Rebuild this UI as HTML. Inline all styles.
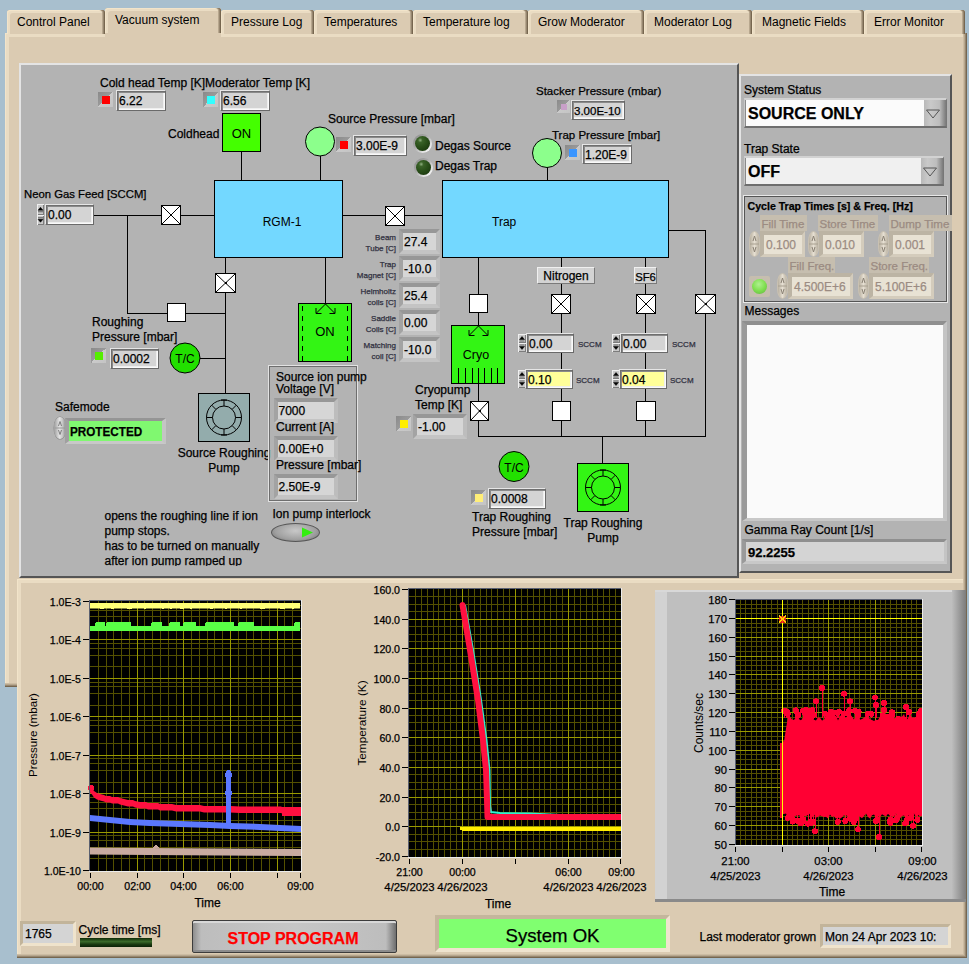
<!DOCTYPE html><html><head><meta charset="utf-8"><style>*{margin:0;padding:0;box-sizing:border-box}
html,body{width:969px;height:964px;overflow:hidden}
body{background:#a8bfce;font-family:"Liberation Sans",sans-serif;font-size:12px;color:#000;position:relative}
div{position:absolute}
.t{white-space:nowrap;-webkit-text-stroke:0.25px currentColor}
.tab{background:#dbcbb2;box-shadow:inset -1px 0 0 #76664f,inset -2px 0 0 #978770,inset -3px 0 0 #b7a78e,inset 1px 1px 0 #f2e4ca,inset 3px 3px 0 #eadcc3;border-radius:3px 3px 0 0;height:24px;top:10px}
.tab span{position:absolute;left:10px;top:5px;white-space:nowrap}
.tabpanel{left:5px;top:33px;width:962px;height:654px;background:#dbcbb2;box-shadow:inset -1px -1px 0 #76664f,inset -2px -2px 0 #978770,inset -3px -3px 0 #b7a78e,inset -4px -4px 0 #ccbca3,inset 1px 1px 0 #f2e4ca,inset 4px 4px 0 #eadcc3}
.gp{background:#b3b3b3}
</style></head><body><div class="tabpanel"></div>
<div class="tab" style="left:7px;width:98px"><span>Control Panel</span></div>
<div class="tab" style="left:221px;width:93px"><span>Pressure Log</span></div>
<div class="tab" style="left:314px;width:99px"><span>Temperatures</span></div>
<div class="tab" style="left:413px;width:115px"><span>Temperature log</span></div>
<div class="tab" style="left:528px;width:116px"><span>Grow Moderator</span></div>
<div class="tab" style="left:644px;width:108px"><span>Moderator Log</span></div>
<div class="tab" style="left:752px;width:112px"><span>Magnetic Fields</span></div>
<div class="tab" style="left:864px;width:101px"><span>Error Monitor</span></div>
<div class="tab" style="left:105px;width:116px;top:8px;height:29px;background:#dbcbb2"><span style="top:5px">Vacuum system</span></div><div style="left:105px;top:33px;width:116px;height:6px;background:#dbcbb2"></div>
<div class="gp" style="left:19px;top:63px;width:720px;height:515px;border-top:2px solid #e4e4e4;border-left:2px solid #e4e4e4;border-right:2px solid #555;border-bottom:2px solid #555"></div>
<div class="gp" style="left:739px;top:74px;width:213px;height:499px;border-top:2px solid #e4e4e4;border-left:2px solid #e4e4e4;border-right:2px solid #555;border-bottom:2px solid #555"></div>
<div style="left:17px;top:579px;width:950px;height:379px;background:#dbcbb2;box-shadow:inset -1px -1px 0 #76664f,inset -2px -2px 0 #978770,inset -3px -3px 0 #b7a78e,inset -4px -4px 0 #ccbca3,inset 1px 1px 0 #f2e4ca,inset 4px 4px 0 #eadcc3"></div>
<svg style="position:absolute;left:0;top:0" width="969" height="964" shape-rendering="crispEdges"><line x1="93" y1="215.5" x2="214" y2="215.5" stroke="#000" stroke-width="1"/><line x1="127.5" y1="215" x2="127.5" y2="314" stroke="#000" stroke-width="1"/><line x1="127" y1="313.5" x2="226" y2="313.5" stroke="#000" stroke-width="1"/><line x1="241.5" y1="151" x2="241.5" y2="180" stroke="#000" stroke-width="1"/><line x1="320.5" y1="156" x2="320.5" y2="180" stroke="#000" stroke-width="1"/><line x1="342" y1="215.5" x2="442" y2="215.5" stroke="#000" stroke-width="1"/><line x1="225.5" y1="257" x2="225.5" y2="393" stroke="#000" stroke-width="1"/><line x1="200" y1="358.5" x2="226" y2="358.5" stroke="#000" stroke-width="1"/><line x1="325.5" y1="257" x2="325.5" y2="303" stroke="#000" stroke-width="1"/><line x1="547.5" y1="167" x2="547.5" y2="180" stroke="#000" stroke-width="1"/><line x1="668" y1="230.5" x2="706" y2="230.5" stroke="#000" stroke-width="1"/><line x1="705.5" y1="230" x2="705.5" y2="437" stroke="#000" stroke-width="1"/><line x1="478" y1="436.5" x2="706" y2="436.5" stroke="#000" stroke-width="1"/><line x1="478.5" y1="257" x2="478.5" y2="437" stroke="#000" stroke-width="1"/><line x1="561.5" y1="257" x2="561.5" y2="437" stroke="#000" stroke-width="1"/><line x1="645.5" y1="257" x2="645.5" y2="437" stroke="#000" stroke-width="1"/><line x1="602.5" y1="436" x2="602.5" y2="463" stroke="#000" stroke-width="1"/><rect x="214.5" y="180.5" width="128" height="77" fill="#73d8ff" stroke="#000"/><rect x="442.5" y="180.5" width="226" height="77" fill="#73d8ff" stroke="#000"/><rect x="161.5" y="205.5" width="19" height="19" fill="#fff" stroke="#000"/><path d="M162 206L180 224M180 206L162 224" stroke="#000" stroke-width="1" shape-rendering="auto"/><rect x="170.0" y="214.0" width="2" height="2" fill="#000"/><rect x="385.5" y="206.5" width="19" height="19" fill="#fff" stroke="#000"/><path d="M386 207L404 225M404 207L386 225" stroke="#000" stroke-width="1" shape-rendering="auto"/><rect x="394.0" y="215.0" width="2" height="2" fill="#000"/><rect x="215.5" y="273.5" width="20" height="19" fill="#fff" stroke="#000"/><path d="M216 274L235 292M235 274L216 292" stroke="#000" stroke-width="1" shape-rendering="auto"/><rect x="224.5" y="282.0" width="2" height="2" fill="#000"/><rect x="695.5" y="294.5" width="20" height="19" fill="#fff" stroke="#000"/><path d="M696 295L715 313M715 295L696 313" stroke="#000" stroke-width="1" shape-rendering="auto"/><rect x="704.5" y="303.0" width="2" height="2" fill="#000"/><rect x="551.5" y="294.5" width="19" height="19" fill="#fff" stroke="#000"/><path d="M552 295L570 313M570 295L552 313" stroke="#000" stroke-width="1" shape-rendering="auto"/><rect x="560.0" y="303.0" width="2" height="2" fill="#000"/><rect x="636.5" y="294.5" width="19" height="19" fill="#fff" stroke="#000"/><path d="M637 295L655 313M655 295L637 313" stroke="#000" stroke-width="1" shape-rendering="auto"/><rect x="645.0" y="303.0" width="2" height="2" fill="#000"/><rect x="470.5" y="401.5" width="18" height="19" fill="#fff" stroke="#000"/><path d="M471 402L488 420M488 402L471 420" stroke="#000" stroke-width="1" shape-rendering="auto"/><rect x="478.5" y="410.0" width="2" height="2" fill="#000"/><rect x="167.5" y="303.5" width="18" height="18" fill="#fff" stroke="#000"/><rect x="469.5" y="294.5" width="18" height="18" fill="#fff" stroke="#000"/><rect x="552.5" y="401.5" width="18" height="19" fill="#fff" stroke="#000"/><rect x="636.5" y="401.5" width="19" height="19" fill="#fff" stroke="#000"/><rect x="298.5" y="303.5" width="53" height="58" fill="#33f514" stroke="#000"/><path d="M302.5 305V361M347.5 305V361" stroke="#000" stroke-dasharray="5 5" stroke-dashoffset="-1"/><path d="M325.5 304L316.5 313M325.5 304L334.5 313M316.0 308V313.5H321.5M335.0 308V313.5H329.5" stroke="#000" fill="none" shape-rendering="auto"/><rect x="451.5" y="325.5" width="53" height="58" fill="#33f514" stroke="#000"/><path d="M478.5 326L469.5 335M478.5 326L487.5 335M469.0 330V335.5H474.5M488.0 330V335.5H482.5" stroke="#000" fill="none" shape-rendering="auto"/><line x1="458.5" y1="368" x2="458.5" y2="383" stroke="#000" stroke-width="1"/><line x1="465.5" y1="368" x2="465.5" y2="383" stroke="#000" stroke-width="1"/><line x1="472.5" y1="368" x2="472.5" y2="383" stroke="#000" stroke-width="1"/><line x1="478.5" y1="368" x2="478.5" y2="383" stroke="#000" stroke-width="1"/><line x1="484.5" y1="368" x2="484.5" y2="383" stroke="#000" stroke-width="1"/><line x1="491.5" y1="368" x2="491.5" y2="383" stroke="#000" stroke-width="1"/><line x1="497.5" y1="368" x2="497.5" y2="383" stroke="#000" stroke-width="1"/><rect x="222.5" y="113.5" width="38" height="38" fill="#44ff00" stroke="#000"/><circle cx="320" cy="141.5" r="14.5" fill="#8cff8c" stroke="#000" shape-rendering="auto"/><circle cx="547" cy="153" r="14.5" fill="#8cff8c" stroke="#000" shape-rendering="auto"/><circle cx="185" cy="358" r="15" fill="#22e000" stroke="#000" shape-rendering="auto"/><circle cx="514" cy="466.5" r="15" fill="#22e000" stroke="#000" shape-rendering="auto"/><rect x="198.5" y="393.5" width="51" height="48" fill="#93acac" stroke="#000"/><g shape-rendering="auto"><circle cx="224" cy="417.5" r="17.5" fill="none" stroke="#000"/><circle cx="224" cy="417.5" r="11.5" fill="none" stroke="#000"/><line x1="235.50" y1="417.50" x2="241.50" y2="417.50" stroke="#000"/><line x1="232.13" y1="425.63" x2="236.37" y2="429.87" stroke="#000"/><line x1="224.00" y1="429.00" x2="224.00" y2="435.00" stroke="#000"/><line x1="215.87" y1="425.63" x2="211.63" y2="429.87" stroke="#000"/><line x1="212.50" y1="417.50" x2="206.50" y2="417.50" stroke="#000"/><line x1="215.87" y1="409.37" x2="211.63" y2="405.13" stroke="#000"/><line x1="224.00" y1="406.00" x2="224.00" y2="400.00" stroke="#000"/><line x1="232.13" y1="409.37" x2="236.37" y2="405.13" stroke="#000"/><path d="M221 400.0H227M221 435.0H227" stroke="#000"/></g><rect x="577.5" y="463.5" width="51" height="48" fill="#33f514" stroke="#000"/><g shape-rendering="auto"><circle cx="603" cy="487.5" r="17.5" fill="none" stroke="#000"/><circle cx="603" cy="487.5" r="11.5" fill="none" stroke="#000"/><line x1="614.50" y1="487.50" x2="620.50" y2="487.50" stroke="#000"/><line x1="611.13" y1="495.63" x2="615.37" y2="499.87" stroke="#000"/><line x1="603.00" y1="499.00" x2="603.00" y2="505.00" stroke="#000"/><line x1="594.87" y1="495.63" x2="590.63" y2="499.87" stroke="#000"/><line x1="591.50" y1="487.50" x2="585.50" y2="487.50" stroke="#000"/><line x1="594.87" y1="479.37" x2="590.63" y2="475.13" stroke="#000"/><line x1="603.00" y1="476.00" x2="603.00" y2="470.00" stroke="#000"/><line x1="611.13" y1="479.37" x2="615.37" y2="475.13" stroke="#000"/><path d="M600 470.0H606M600 505.0H606" stroke="#000"/></g></svg><svg style="position:absolute;left:0;top:0" width="969" height="964" shape-rendering="crispEdges"><defs><clipPath id="cp2"><rect x="409" y="589" width="212" height="268"/></clipPath><clipPath id="cp3"><rect x="736" y="600" width="186" height="245"/></clipPath><linearGradient id="gr3" x1="0" x2="1"><stop offset="0" stop-color="#bdbdbd"/><stop offset="1" stop-color="#7c7c7c"/></linearGradient></defs><rect x="90" y="601" width="211" height="270" fill="#000"/><line x1="90" y1="858.5" x2="301" y2="858.5" stroke="#545000" stroke-width="1"/><line x1="90" y1="847.5" x2="301" y2="847.5" stroke="#545000" stroke-width="1"/><line x1="90" y1="840.5" x2="301" y2="840.5" stroke="#545000" stroke-width="1"/><line x1="90" y1="835.5" x2="301" y2="835.5" stroke="#545000" stroke-width="1"/><line x1="90" y1="820.5" x2="301" y2="820.5" stroke="#545000" stroke-width="1"/><line x1="90" y1="808.5" x2="301" y2="808.5" stroke="#545000" stroke-width="1"/><line x1="90" y1="802.5" x2="301" y2="802.5" stroke="#545000" stroke-width="1"/><line x1="90" y1="797.5" x2="301" y2="797.5" stroke="#545000" stroke-width="1"/><line x1="90" y1="782.5" x2="301" y2="782.5" stroke="#545000" stroke-width="1"/><line x1="90" y1="770.5" x2="301" y2="770.5" stroke="#545000" stroke-width="1"/><line x1="90" y1="763.5" x2="301" y2="763.5" stroke="#545000" stroke-width="1"/><line x1="90" y1="758.5" x2="301" y2="758.5" stroke="#545000" stroke-width="1"/><line x1="90" y1="743.5" x2="301" y2="743.5" stroke="#545000" stroke-width="1"/><line x1="90" y1="732.5" x2="301" y2="732.5" stroke="#545000" stroke-width="1"/><line x1="90" y1="725.5" x2="301" y2="725.5" stroke="#545000" stroke-width="1"/><line x1="90" y1="720.5" x2="301" y2="720.5" stroke="#545000" stroke-width="1"/><line x1="90" y1="705.5" x2="301" y2="705.5" stroke="#545000" stroke-width="1"/><line x1="90" y1="693.5" x2="301" y2="693.5" stroke="#545000" stroke-width="1"/><line x1="90" y1="686.5" x2="301" y2="686.5" stroke="#545000" stroke-width="1"/><line x1="90" y1="682.5" x2="301" y2="682.5" stroke="#545000" stroke-width="1"/><line x1="90" y1="666.5" x2="301" y2="666.5" stroke="#545000" stroke-width="1"/><line x1="90" y1="655.5" x2="301" y2="655.5" stroke="#545000" stroke-width="1"/><line x1="90" y1="648.5" x2="301" y2="648.5" stroke="#545000" stroke-width="1"/><line x1="90" y1="643.5" x2="301" y2="643.5" stroke="#545000" stroke-width="1"/><line x1="90" y1="628.5" x2="301" y2="628.5" stroke="#545000" stroke-width="1"/><line x1="90" y1="616.5" x2="301" y2="616.5" stroke="#545000" stroke-width="1"/><line x1="90" y1="610.5" x2="301" y2="610.5" stroke="#545000" stroke-width="1"/><line x1="90" y1="605.5" x2="301" y2="605.5" stroke="#545000" stroke-width="1"/><line x1="98.5" y1="601" x2="98.5" y2="871" stroke="#545000" stroke-width="1"/><line x1="106.5" y1="601" x2="106.5" y2="871" stroke="#545000" stroke-width="1"/><line x1="113.5" y1="601" x2="113.5" y2="871" stroke="#545000" stroke-width="1"/><line x1="121.5" y1="601" x2="121.5" y2="871" stroke="#545000" stroke-width="1"/><line x1="129.5" y1="601" x2="129.5" y2="871" stroke="#545000" stroke-width="1"/><line x1="144.5" y1="601" x2="144.5" y2="871" stroke="#545000" stroke-width="1"/><line x1="152.5" y1="601" x2="152.5" y2="871" stroke="#545000" stroke-width="1"/><line x1="160.5" y1="601" x2="160.5" y2="871" stroke="#545000" stroke-width="1"/><line x1="168.5" y1="601" x2="168.5" y2="871" stroke="#545000" stroke-width="1"/><line x1="176.5" y1="601" x2="176.5" y2="871" stroke="#545000" stroke-width="1"/><line x1="191.5" y1="601" x2="191.5" y2="871" stroke="#545000" stroke-width="1"/><line x1="199.5" y1="601" x2="199.5" y2="871" stroke="#545000" stroke-width="1"/><line x1="207.5" y1="601" x2="207.5" y2="871" stroke="#545000" stroke-width="1"/><line x1="214.5" y1="601" x2="214.5" y2="871" stroke="#545000" stroke-width="1"/><line x1="222.5" y1="601" x2="222.5" y2="871" stroke="#545000" stroke-width="1"/><line x1="238.5" y1="601" x2="238.5" y2="871" stroke="#545000" stroke-width="1"/><line x1="246.5" y1="601" x2="246.5" y2="871" stroke="#545000" stroke-width="1"/><line x1="253.5" y1="601" x2="253.5" y2="871" stroke="#545000" stroke-width="1"/><line x1="261.5" y1="601" x2="261.5" y2="871" stroke="#545000" stroke-width="1"/><line x1="269.5" y1="601" x2="269.5" y2="871" stroke="#545000" stroke-width="1"/><line x1="284.5" y1="601" x2="284.5" y2="871" stroke="#545000" stroke-width="1"/><line x1="292.5" y1="601" x2="292.5" y2="871" stroke="#545000" stroke-width="1"/><line x1="90" y1="832.5" x2="301" y2="832.5" stroke="#999900" stroke-width="1"/><line x1="90" y1="793.5" x2="301" y2="793.5" stroke="#999900" stroke-width="1"/><line x1="90" y1="755.5" x2="301" y2="755.5" stroke="#999900" stroke-width="1"/><line x1="90" y1="716.5" x2="301" y2="716.5" stroke="#999900" stroke-width="1"/><line x1="90" y1="678.5" x2="301" y2="678.5" stroke="#999900" stroke-width="1"/><line x1="90" y1="639.5" x2="301" y2="639.5" stroke="#999900" stroke-width="1"/><line x1="137.5" y1="601" x2="137.5" y2="871" stroke="#999900" stroke-width="1"/><line x1="183.5" y1="601" x2="183.5" y2="871" stroke="#999900" stroke-width="1"/><line x1="230.5" y1="601" x2="230.5" y2="871" stroke="#999900" stroke-width="1"/><line x1="277.5" y1="601" x2="277.5" y2="871" stroke="#999900" stroke-width="1"/><polygon points="90.0,603.0 92.0,603.0 94.0,603.0 96.0,603.0 98.0,603.0 100.0,603.0 102.0,603.0 104.0,603.0 106.0,603.0 108.0,603.0 110.0,603.0 112.0,603.0 114.0,603.0 116.0,603.0 118.0,603.0 120.0,603.0 122.0,603.0 124.0,603.0 126.0,603.0 128.0,603.0 130.0,603.0 132.0,603.0 134.0,603.0 136.0,603.0 138.0,603.0 140.0,603.0 142.0,603.0 144.0,603.0 146.0,603.0 148.0,603.0 150.0,603.0 152.0,603.0 154.0,603.0 156.0,603.0 158.0,603.0 160.0,603.0 162.0,603.0 164.0,603.0 166.0,603.0 168.0,603.0 170.0,603.0 172.0,603.0 174.0,603.0 176.0,603.0 178.0,603.0 180.0,603.0 182.0,603.0 184.0,603.0 186.0,603.0 188.0,603.0 190.0,603.0 192.0,603.0 194.0,603.0 196.0,603.0 198.0,603.0 200.0,603.0 202.0,603.0 204.0,603.0 206.0,603.0 208.0,603.0 210.0,603.0 212.0,603.0 214.0,603.0 216.0,603.0 218.0,603.0 220.0,603.0 222.0,603.0 224.0,603.0 226.0,603.0 228.0,603.0 230.0,603.0 232.0,603.0 234.0,603.0 236.0,603.0 238.0,603.0 240.0,603.0 242.0,603.0 244.0,603.0 246.0,603.0 248.0,603.0 250.0,603.0 252.0,603.0 254.0,603.0 256.0,603.0 258.0,603.0 260.0,603.0 262.0,603.0 264.0,603.0 266.0,603.0 268.0,603.0 270.0,603.0 272.0,603.0 274.0,603.0 276.0,603.0 278.0,603.0 280.0,603.0 282.0,603.0 284.0,603.0 286.0,603.0 288.0,603.0 290.0,603.0 292.0,603.0 294.0,603.0 296.0,603.0 298.0,603.0 300.0,603.0 300.0,608.5 298.0,608.5 296.0,608.5 294.0,608.5 292.0,608.5 290.0,608.5 288.0,608.5 286.0,608.5 284.0,608.5 282.0,608.5 280.0,608.5 278.0,608.5 276.0,608.5 274.0,608.5 272.0,608.5 270.0,608.5 268.0,608.5 266.0,608.5 264.0,608.5 262.0,608.5 260.0,608.5 258.0,608.5 256.0,608.5 254.0,608.5 252.0,608.5 250.0,608.5 248.0,608.5 246.0,608.5 244.0,608.5 242.0,608.5 240.0,608.5 238.0,608.5 236.0,608.5 234.0,608.5 232.0,608.5 230.0,608.5 228.0,608.5 226.0,608.5 224.0,608.5 222.0,608.5 220.0,608.5 218.0,608.5 216.0,608.5 214.0,608.5 212.0,608.5 210.0,608.5 208.0,608.5 206.0,608.5 204.0,608.5 202.0,608.5 200.0,608.5 198.0,608.5 196.0,608.5 194.0,608.5 192.0,608.5 190.0,608.5 188.0,608.5 186.0,608.5 184.0,608.5 182.0,608.5 180.0,608.5 178.0,608.5 176.0,608.5 174.0,608.5 172.0,608.5 170.0,608.5 168.0,608.5 166.0,608.5 164.0,608.5 162.0,608.5 160.0,608.5 158.0,608.5 156.0,608.5 154.0,608.5 152.0,608.5 150.0,608.5 148.0,608.5 146.0,608.5 144.0,608.5 142.0,608.5 140.0,608.5 138.0,608.5 136.0,608.5 134.0,608.5 132.0,608.5 130.0,608.5 128.0,608.5 126.0,608.5 124.0,608.5 122.0,608.5 120.0,608.5 118.0,608.5 116.0,608.5 114.0,608.5 112.0,608.5 110.0,608.5 108.0,608.5 106.0,608.5 104.0,608.5 102.0,608.5 100.0,608.5 98.0,608.5 96.0,608.5 94.0,608.5 92.0,608.5 90.0,608.5" fill="#ffff78" shape-rendering="auto"/><rect x="100" y="607" width="4" height="2" fill="#ffff78"/><rect x="111" y="607" width="3" height="2" fill="#ffff78"/><rect x="127" y="607" width="5" height="2" fill="#ffff78"/><rect x="144" y="607" width="2" height="2" fill="#ffff78"/><rect x="162" y="607" width="2" height="2" fill="#ffff78"/><rect x="170" y="607" width="2" height="2" fill="#ffff78"/><rect x="180" y="607" width="4" height="2" fill="#ffff78"/><rect x="190" y="607" width="2" height="2" fill="#ffff78"/><rect x="210" y="607" width="3" height="2" fill="#ffff78"/><rect x="225" y="607" width="2" height="2" fill="#ffff78"/><rect x="240" y="607" width="2" height="2" fill="#ffff78"/><rect x="260" y="607" width="5" height="2" fill="#ffff78"/><rect x="280" y="607" width="5" height="2" fill="#ffff78"/><rect x="292" y="607" width="2" height="2" fill="#ffff78"/><polygon points="90.0,626.0 92.0,626.0 94.0,626.0 96.0,626.0 98.0,626.0 100.0,626.0 102.0,626.0 104.0,626.0 106.0,626.0 108.0,626.0 110.0,626.0 112.0,626.0 114.0,626.0 116.0,626.0 118.0,626.0 120.0,626.0 122.0,626.0 124.0,626.0 126.0,626.0 128.0,626.0 130.0,626.0 132.0,626.0 134.0,626.0 136.0,626.0 138.0,626.0 140.0,626.0 142.0,626.0 144.0,626.0 146.0,626.0 148.0,626.0 150.0,626.0 152.0,626.0 154.0,626.0 156.0,626.0 158.0,626.0 160.0,626.0 162.0,626.0 164.0,626.0 166.0,626.0 168.0,626.0 170.0,626.0 172.0,626.0 174.0,626.0 176.0,626.0 178.0,626.0 180.0,626.0 182.0,626.0 184.0,626.0 186.0,626.0 188.0,626.0 190.0,626.0 192.0,626.0 194.0,626.0 196.0,626.0 198.0,626.0 200.0,626.0 202.0,626.0 204.0,626.0 206.0,626.0 208.0,626.0 210.0,626.0 212.0,626.0 214.0,626.0 216.0,626.0 218.0,626.0 220.0,626.0 222.0,626.0 224.0,626.0 226.0,626.0 228.0,626.0 230.0,626.0 232.0,626.0 234.0,626.0 236.0,626.0 238.0,626.0 240.0,626.0 242.0,626.0 244.0,626.0 246.0,626.0 248.0,626.0 250.0,626.0 252.0,626.0 254.0,626.0 256.0,626.0 258.0,626.0 260.0,626.0 262.0,626.0 264.0,626.0 266.0,626.0 268.0,626.0 270.0,626.0 272.0,626.0 274.0,626.0 276.0,626.0 278.0,626.0 280.0,626.0 282.0,626.0 284.0,626.0 286.0,626.0 288.0,626.0 290.0,626.0 292.0,626.0 294.0,626.0 296.0,626.0 298.0,626.0 300.0,626.0 300.0,631.0 298.0,631.0 296.0,631.0 294.0,631.0 292.0,631.0 290.0,631.0 288.0,631.0 286.0,631.0 284.0,631.0 282.0,631.0 280.0,631.0 278.0,631.0 276.0,631.0 274.0,631.0 272.0,631.0 270.0,631.0 268.0,631.0 266.0,631.0 264.0,631.0 262.0,631.0 260.0,631.0 258.0,631.0 256.0,631.0 254.0,631.0 252.0,631.0 250.0,631.0 248.0,631.0 246.0,631.0 244.0,631.0 242.0,631.0 240.0,631.0 238.0,631.0 236.0,631.0 234.0,631.0 232.0,631.0 230.0,631.0 228.0,631.0 226.0,631.0 224.0,631.0 222.0,631.0 220.0,631.0 218.0,631.0 216.0,631.0 214.0,631.0 212.0,631.0 210.0,631.0 208.0,631.0 206.0,631.0 204.0,631.0 202.0,631.0 200.0,631.0 198.0,631.0 196.0,631.0 194.0,631.0 192.0,631.0 190.0,631.0 188.0,631.0 186.0,631.0 184.0,631.0 182.0,631.0 180.0,631.0 178.0,631.0 176.0,631.0 174.0,631.0 172.0,631.0 170.0,631.0 168.0,631.0 166.0,631.0 164.0,631.0 162.0,631.0 160.0,631.0 158.0,631.0 156.0,631.0 154.0,631.0 152.0,631.0 150.0,631.0 148.0,631.0 146.0,631.0 144.0,631.0 142.0,631.0 140.0,631.0 138.0,631.0 136.0,631.0 134.0,631.0 132.0,631.0 130.0,631.0 128.0,631.0 126.0,631.0 124.0,631.0 122.0,631.0 120.0,631.0 118.0,631.0 116.0,631.0 114.0,631.0 112.0,631.0 110.0,631.0 108.0,631.0 106.0,631.0 104.0,631.0 102.0,631.0 100.0,631.0 98.0,631.0 96.0,631.0 94.0,631.0 92.0,631.0 90.0,631.0" fill="#5aff46" shape-rendering="auto"/><rect x="95" y="622" width="10" height="6" rx="2" fill="#5aff46"/><rect x="106" y="622" width="25" height="6" rx="2" fill="#5aff46"/><rect x="151" y="622" width="11" height="6" rx="2" fill="#5aff46"/><rect x="169" y="622" width="11" height="6" rx="2" fill="#5aff46"/><rect x="183" y="622" width="13" height="6" rx="2" fill="#5aff46"/><rect x="205" y="622" width="29" height="6" rx="2" fill="#5aff46"/><rect x="238" y="622" width="16" height="6" rx="2" fill="#5aff46"/><rect x="294" y="622" width="6" height="6" rx="2" fill="#5aff46"/><polygon points="90.0,786.0 92.0,788.0 94.0,791.0 97.0,793.0 100.0,794.0 104.0,795.0 106.0,796.0 110.0,796.0 112.0,797.0 118.0,797.0 120.0,798.0 124.0,799.0 128.0,800.0 133.0,800.0 135.0,801.0 140.0,802.0 146.0,802.0 148.0,803.0 158.0,803.0 160.0,804.0 172.0,804.0 176.0,805.0 200.0,805.0 204.0,806.0 230.0,806.0 240.0,806.5 281.0,806.5 282.0,807.0 301.0,807.0 301.0,813.5 282.0,813.5 281.0,813.0 240.0,813.0 230.0,812.5 204.0,812.5 200.0,811.5 176.0,811.5 172.0,810.5 160.0,810.5 158.0,809.5 148.0,809.5 146.0,808.5 140.0,808.5 135.0,807.5 133.0,806.5 128.0,806.5 124.0,805.5 120.0,804.5 118.0,803.5 112.0,803.5 110.0,802.5 106.0,802.5 104.0,801.5 100.0,800.5 97.0,799.5 94.0,797.5 92.0,794.5 90.0,792.5" fill="#ff1040" shape-rendering="auto"/><rect x="282" y="809" width="19" height="7" fill="#ff1040"/><circle cx="91" cy="788" r="3" fill="#ff1040"/><polygon points="90.0,815.0 110.0,817.0 130.0,819.0 150.0,820.0 180.0,821.0 210.0,822.0 230.0,823.0 260.0,824.0 280.0,825.0 301.0,826.0 301.0,832.0 280.0,831.0 260.0,830.0 230.0,829.0 210.0,828.0 180.0,827.0 150.0,826.0 130.0,825.0 110.0,823.0 90.0,821.0" fill="#5b78ff" shape-rendering="auto"/><rect x="226" y="771" width="5" height="54" rx="2" fill="#5b78ff"/><ellipse cx="228.5" cy="775" rx="3.2" ry="5" fill="#5b78ff"/><ellipse cx="228.5" cy="793" rx="3.2" ry="4" fill="#5b78ff"/><polygon points="90.0,847.5 150.0,848.0 301.0,849.0 301.0,856.0 150.0,855.0 90.0,854.5" fill="#c8aaa0" shape-rendering="auto"/><polygon points="152,848 156,844.5 160,848" fill="#c8a8a0"/><line x1="89.5" y1="600" x2="89.5" y2="871" stroke="#5a6070" stroke-width="1"/><line x1="89" y1="600.5" x2="301" y2="600.5" stroke="#5a6070" stroke-width="1"/><line x1="89" y1="871.5" x2="302" y2="871.5" stroke="#ececec" stroke-width="1"/><line x1="301.5" y1="600" x2="301.5" y2="872" stroke="#ececec" stroke-width="1"/><line x1="83" y1="870.5" x2="89" y2="870.5" stroke="#000" stroke-width="1"/><line x1="83" y1="832.5" x2="89" y2="832.5" stroke="#000" stroke-width="1"/><line x1="83" y1="793.5" x2="89" y2="793.5" stroke="#000" stroke-width="1"/><line x1="83" y1="755.5" x2="89" y2="755.5" stroke="#000" stroke-width="1"/><line x1="83" y1="716.5" x2="89" y2="716.5" stroke="#000" stroke-width="1"/><line x1="83" y1="678.5" x2="89" y2="678.5" stroke="#000" stroke-width="1"/><line x1="83" y1="639.5" x2="89" y2="639.5" stroke="#000" stroke-width="1"/><line x1="83" y1="601.5" x2="89" y2="601.5" stroke="#000" stroke-width="1"/><line x1="90.5" y1="873" x2="90.5" y2="878" stroke="#000" stroke-width="1"/><line x1="137.5" y1="873" x2="137.5" y2="878" stroke="#000" stroke-width="1"/><line x1="183.5" y1="873" x2="183.5" y2="878" stroke="#000" stroke-width="1"/><line x1="230.5" y1="873" x2="230.5" y2="878" stroke="#000" stroke-width="1"/><line x1="277.5" y1="873" x2="277.5" y2="878" stroke="#000" stroke-width="1"/><line x1="300.5" y1="873" x2="300.5" y2="878" stroke="#000" stroke-width="1"/><text transform="translate(36.5,735) rotate(-90)" text-anchor="middle" font-size="11.6" font-family="Liberation Sans">Pressure (mbar)</text><rect x="409" y="589" width="212" height="268" fill="#000"/><line x1="409" y1="849.5" x2="621" y2="849.5" stroke="#545000" stroke-width="1"/><line x1="409" y1="841.5" x2="621" y2="841.5" stroke="#545000" stroke-width="1"/><line x1="409" y1="834.5" x2="621" y2="834.5" stroke="#545000" stroke-width="1"/><line x1="409" y1="819.5" x2="621" y2="819.5" stroke="#545000" stroke-width="1"/><line x1="409" y1="812.5" x2="621" y2="812.5" stroke="#545000" stroke-width="1"/><line x1="409" y1="804.5" x2="621" y2="804.5" stroke="#545000" stroke-width="1"/><line x1="409" y1="789.5" x2="621" y2="789.5" stroke="#545000" stroke-width="1"/><line x1="409" y1="782.5" x2="621" y2="782.5" stroke="#545000" stroke-width="1"/><line x1="409" y1="774.5" x2="621" y2="774.5" stroke="#545000" stroke-width="1"/><line x1="409" y1="760.5" x2="621" y2="760.5" stroke="#545000" stroke-width="1"/><line x1="409" y1="752.5" x2="621" y2="752.5" stroke="#545000" stroke-width="1"/><line x1="409" y1="745.5" x2="621" y2="745.5" stroke="#545000" stroke-width="1"/><line x1="409" y1="730.5" x2="621" y2="730.5" stroke="#545000" stroke-width="1"/><line x1="409" y1="722.5" x2="621" y2="722.5" stroke="#545000" stroke-width="1"/><line x1="409" y1="715.5" x2="621" y2="715.5" stroke="#545000" stroke-width="1"/><line x1="409" y1="700.5" x2="621" y2="700.5" stroke="#545000" stroke-width="1"/><line x1="409" y1="693.5" x2="621" y2="693.5" stroke="#545000" stroke-width="1"/><line x1="409" y1="685.5" x2="621" y2="685.5" stroke="#545000" stroke-width="1"/><line x1="409" y1="671.5" x2="621" y2="671.5" stroke="#545000" stroke-width="1"/><line x1="409" y1="663.5" x2="621" y2="663.5" stroke="#545000" stroke-width="1"/><line x1="409" y1="656.5" x2="621" y2="656.5" stroke="#545000" stroke-width="1"/><line x1="409" y1="641.5" x2="621" y2="641.5" stroke="#545000" stroke-width="1"/><line x1="409" y1="634.5" x2="621" y2="634.5" stroke="#545000" stroke-width="1"/><line x1="409" y1="626.5" x2="621" y2="626.5" stroke="#545000" stroke-width="1"/><line x1="409" y1="611.5" x2="621" y2="611.5" stroke="#545000" stroke-width="1"/><line x1="409" y1="604.5" x2="621" y2="604.5" stroke="#545000" stroke-width="1"/><line x1="409" y1="596.5" x2="621" y2="596.5" stroke="#545000" stroke-width="1"/><line x1="415.5" y1="589" x2="415.5" y2="857" stroke="#545000" stroke-width="1"/><line x1="421.5" y1="589" x2="421.5" y2="857" stroke="#545000" stroke-width="1"/><line x1="427.5" y1="589" x2="427.5" y2="857" stroke="#545000" stroke-width="1"/><line x1="433.5" y1="589" x2="433.5" y2="857" stroke="#545000" stroke-width="1"/><line x1="438.5" y1="589" x2="438.5" y2="857" stroke="#545000" stroke-width="1"/><line x1="444.5" y1="589" x2="444.5" y2="857" stroke="#545000" stroke-width="1"/><line x1="450.5" y1="589" x2="450.5" y2="857" stroke="#545000" stroke-width="1"/><line x1="456.5" y1="589" x2="456.5" y2="857" stroke="#545000" stroke-width="1"/><line x1="468.5" y1="589" x2="468.5" y2="857" stroke="#545000" stroke-width="1"/><line x1="474.5" y1="589" x2="474.5" y2="857" stroke="#545000" stroke-width="1"/><line x1="480.5" y1="589" x2="480.5" y2="857" stroke="#545000" stroke-width="1"/><line x1="486.5" y1="589" x2="486.5" y2="857" stroke="#545000" stroke-width="1"/><line x1="491.5" y1="589" x2="491.5" y2="857" stroke="#545000" stroke-width="1"/><line x1="497.5" y1="589" x2="497.5" y2="857" stroke="#545000" stroke-width="1"/><line x1="503.5" y1="589" x2="503.5" y2="857" stroke="#545000" stroke-width="1"/><line x1="509.5" y1="589" x2="509.5" y2="857" stroke="#545000" stroke-width="1"/><line x1="521.5" y1="589" x2="521.5" y2="857" stroke="#545000" stroke-width="1"/><line x1="527.5" y1="589" x2="527.5" y2="857" stroke="#545000" stroke-width="1"/><line x1="533.5" y1="589" x2="533.5" y2="857" stroke="#545000" stroke-width="1"/><line x1="539.5" y1="589" x2="539.5" y2="857" stroke="#545000" stroke-width="1"/><line x1="544.5" y1="589" x2="544.5" y2="857" stroke="#545000" stroke-width="1"/><line x1="550.5" y1="589" x2="550.5" y2="857" stroke="#545000" stroke-width="1"/><line x1="556.5" y1="589" x2="556.5" y2="857" stroke="#545000" stroke-width="1"/><line x1="562.5" y1="589" x2="562.5" y2="857" stroke="#545000" stroke-width="1"/><line x1="574.5" y1="589" x2="574.5" y2="857" stroke="#545000" stroke-width="1"/><line x1="580.5" y1="589" x2="580.5" y2="857" stroke="#545000" stroke-width="1"/><line x1="586.5" y1="589" x2="586.5" y2="857" stroke="#545000" stroke-width="1"/><line x1="592.5" y1="589" x2="592.5" y2="857" stroke="#545000" stroke-width="1"/><line x1="597.5" y1="589" x2="597.5" y2="857" stroke="#545000" stroke-width="1"/><line x1="603.5" y1="589" x2="603.5" y2="857" stroke="#545000" stroke-width="1"/><line x1="609.5" y1="589" x2="609.5" y2="857" stroke="#545000" stroke-width="1"/><line x1="615.5" y1="589" x2="615.5" y2="857" stroke="#545000" stroke-width="1"/><line x1="409" y1="826.5" x2="621" y2="826.5" stroke="#999900" stroke-width="1"/><line x1="409" y1="797.5" x2="621" y2="797.5" stroke="#999900" stroke-width="1"/><line x1="409" y1="767.5" x2="621" y2="767.5" stroke="#999900" stroke-width="1"/><line x1="409" y1="737.5" x2="621" y2="737.5" stroke="#999900" stroke-width="1"/><line x1="409" y1="708.5" x2="621" y2="708.5" stroke="#999900" stroke-width="1"/><line x1="409" y1="678.5" x2="621" y2="678.5" stroke="#999900" stroke-width="1"/><line x1="409" y1="648.5" x2="621" y2="648.5" stroke="#999900" stroke-width="1"/><line x1="409" y1="619.5" x2="621" y2="619.5" stroke="#999900" stroke-width="1"/><line x1="462.5" y1="589" x2="462.5" y2="857" stroke="#999900" stroke-width="1"/><line x1="515.5" y1="589" x2="515.5" y2="857" stroke="#999900" stroke-width="1"/><line x1="568.5" y1="589" x2="568.5" y2="857" stroke="#999900" stroke-width="1"/><polyline points="465,605 473,650 481,700 486.5,740 489.5,770 490,806 491,812 500,813 530,813.5 550,814.5 570,815.5 621,816" fill="none" stroke="#30f0d0" stroke-width="2" shape-rendering="auto"/><polyline points="462.5,605 470,650 478,700 483,740 486,770 487,800 487.5,817 500,817 621,817" fill="none" stroke="#ff1040" stroke-width="6" stroke-linejoin="round" stroke-linecap="round" shape-rendering="auto" clip-path="url(#cp2)"/><line x1="462" y1="828.5" x2="621" y2="828.5" stroke="#ffee00" stroke-width="4" stroke-linecap="round" clip-path="url(#cp2)"/><line x1="408.5" y1="588" x2="408.5" y2="857" stroke="#5a6070" stroke-width="1"/><line x1="408" y1="588.5" x2="621" y2="588.5" stroke="#5a6070" stroke-width="1"/><line x1="408" y1="857.5" x2="622" y2="857.5" stroke="#ececec" stroke-width="1"/><line x1="621.5" y1="588" x2="621.5" y2="858" stroke="#ececec" stroke-width="1"/><line x1="402" y1="856.5" x2="408" y2="856.5" stroke="#000" stroke-width="1"/><line x1="402" y1="826.5" x2="408" y2="826.5" stroke="#000" stroke-width="1"/><line x1="402" y1="797.5" x2="408" y2="797.5" stroke="#000" stroke-width="1"/><line x1="402" y1="767.5" x2="408" y2="767.5" stroke="#000" stroke-width="1"/><line x1="402" y1="737.5" x2="408" y2="737.5" stroke="#000" stroke-width="1"/><line x1="402" y1="708.5" x2="408" y2="708.5" stroke="#000" stroke-width="1"/><line x1="402" y1="678.5" x2="408" y2="678.5" stroke="#000" stroke-width="1"/><line x1="402" y1="648.5" x2="408" y2="648.5" stroke="#000" stroke-width="1"/><line x1="402" y1="619.5" x2="408" y2="619.5" stroke="#000" stroke-width="1"/><line x1="402" y1="589.5" x2="408" y2="589.5" stroke="#000" stroke-width="1"/><line x1="409.5" y1="859" x2="409.5" y2="864" stroke="#000" stroke-width="1"/><line x1="462.5" y1="859" x2="462.5" y2="864" stroke="#000" stroke-width="1"/><line x1="515.5" y1="859" x2="515.5" y2="864" stroke="#000" stroke-width="1"/><line x1="568.5" y1="859" x2="568.5" y2="864" stroke="#000" stroke-width="1"/><line x1="620.5" y1="859" x2="620.5" y2="864" stroke="#000" stroke-width="1"/><text transform="translate(365.5,723) rotate(-90)" text-anchor="middle" font-size="11.8" font-family="Liberation Sans">Temperature (K)</text><rect x="655" y="590" width="311" height="312" fill="#bfbfbf"/><rect x="655" y="590" width="12" height="312" fill="#d2d2d2"/><rect x="655" y="590" width="311" height="2" fill="#d8d8d8"/><rect x="952" y="590" width="14" height="312" fill="url(#gr3)"/><rect x="655" y="899" width="311" height="3" fill="#8a8a8a"/><rect x="736" y="600" width="186" height="245" fill="#000"/><line x1="736" y1="839.5" x2="922" y2="839.5" stroke="#545000" stroke-width="1"/><line x1="736" y1="835.5" x2="922" y2="835.5" stroke="#545000" stroke-width="1"/><line x1="736" y1="830.5" x2="922" y2="830.5" stroke="#545000" stroke-width="1"/><line x1="736" y1="820.5" x2="922" y2="820.5" stroke="#545000" stroke-width="1"/><line x1="736" y1="816.5" x2="922" y2="816.5" stroke="#545000" stroke-width="1"/><line x1="736" y1="811.5" x2="922" y2="811.5" stroke="#545000" stroke-width="1"/><line x1="736" y1="802.5" x2="922" y2="802.5" stroke="#545000" stroke-width="1"/><line x1="736" y1="797.5" x2="922" y2="797.5" stroke="#545000" stroke-width="1"/><line x1="736" y1="792.5" x2="922" y2="792.5" stroke="#545000" stroke-width="1"/><line x1="736" y1="783.5" x2="922" y2="783.5" stroke="#545000" stroke-width="1"/><line x1="736" y1="778.5" x2="922" y2="778.5" stroke="#545000" stroke-width="1"/><line x1="736" y1="773.5" x2="922" y2="773.5" stroke="#545000" stroke-width="1"/><line x1="736" y1="764.5" x2="922" y2="764.5" stroke="#545000" stroke-width="1"/><line x1="736" y1="759.5" x2="922" y2="759.5" stroke="#545000" stroke-width="1"/><line x1="736" y1="754.5" x2="922" y2="754.5" stroke="#545000" stroke-width="1"/><line x1="736" y1="745.5" x2="922" y2="745.5" stroke="#545000" stroke-width="1"/><line x1="736" y1="740.5" x2="922" y2="740.5" stroke="#545000" stroke-width="1"/><line x1="736" y1="736.5" x2="922" y2="736.5" stroke="#545000" stroke-width="1"/><line x1="736" y1="726.5" x2="922" y2="726.5" stroke="#545000" stroke-width="1"/><line x1="736" y1="722.5" x2="922" y2="722.5" stroke="#545000" stroke-width="1"/><line x1="736" y1="717.5" x2="922" y2="717.5" stroke="#545000" stroke-width="1"/><line x1="736" y1="707.5" x2="922" y2="707.5" stroke="#545000" stroke-width="1"/><line x1="736" y1="703.5" x2="922" y2="703.5" stroke="#545000" stroke-width="1"/><line x1="736" y1="698.5" x2="922" y2="698.5" stroke="#545000" stroke-width="1"/><line x1="736" y1="689.5" x2="922" y2="689.5" stroke="#545000" stroke-width="1"/><line x1="736" y1="684.5" x2="922" y2="684.5" stroke="#545000" stroke-width="1"/><line x1="736" y1="679.5" x2="922" y2="679.5" stroke="#545000" stroke-width="1"/><line x1="736" y1="670.5" x2="922" y2="670.5" stroke="#545000" stroke-width="1"/><line x1="736" y1="665.5" x2="922" y2="665.5" stroke="#545000" stroke-width="1"/><line x1="736" y1="660.5" x2="922" y2="660.5" stroke="#545000" stroke-width="1"/><line x1="736" y1="651.5" x2="922" y2="651.5" stroke="#545000" stroke-width="1"/><line x1="736" y1="646.5" x2="922" y2="646.5" stroke="#545000" stroke-width="1"/><line x1="736" y1="641.5" x2="922" y2="641.5" stroke="#545000" stroke-width="1"/><line x1="736" y1="632.5" x2="922" y2="632.5" stroke="#545000" stroke-width="1"/><line x1="736" y1="627.5" x2="922" y2="627.5" stroke="#545000" stroke-width="1"/><line x1="736" y1="623.5" x2="922" y2="623.5" stroke="#545000" stroke-width="1"/><line x1="736" y1="613.5" x2="922" y2="613.5" stroke="#545000" stroke-width="1"/><line x1="736" y1="608.5" x2="922" y2="608.5" stroke="#545000" stroke-width="1"/><line x1="736" y1="604.5" x2="922" y2="604.5" stroke="#545000" stroke-width="1"/><line x1="740.5" y1="600" x2="740.5" y2="845" stroke="#545000" stroke-width="1"/><line x1="745.5" y1="600" x2="745.5" y2="845" stroke="#545000" stroke-width="1"/><line x1="751.5" y1="600" x2="751.5" y2="845" stroke="#545000" stroke-width="1"/><line x1="756.5" y1="600" x2="756.5" y2="845" stroke="#545000" stroke-width="1"/><line x1="761.5" y1="600" x2="761.5" y2="845" stroke="#545000" stroke-width="1"/><line x1="766.5" y1="600" x2="766.5" y2="845" stroke="#545000" stroke-width="1"/><line x1="771.5" y1="600" x2="771.5" y2="845" stroke="#545000" stroke-width="1"/><line x1="777.5" y1="600" x2="777.5" y2="845" stroke="#545000" stroke-width="1"/><line x1="787.5" y1="600" x2="787.5" y2="845" stroke="#545000" stroke-width="1"/><line x1="792.5" y1="600" x2="792.5" y2="845" stroke="#545000" stroke-width="1"/><line x1="797.5" y1="600" x2="797.5" y2="845" stroke="#545000" stroke-width="1"/><line x1="802.5" y1="600" x2="802.5" y2="845" stroke="#545000" stroke-width="1"/><line x1="808.5" y1="600" x2="808.5" y2="845" stroke="#545000" stroke-width="1"/><line x1="813.5" y1="600" x2="813.5" y2="845" stroke="#545000" stroke-width="1"/><line x1="818.5" y1="600" x2="818.5" y2="845" stroke="#545000" stroke-width="1"/><line x1="823.5" y1="600" x2="823.5" y2="845" stroke="#545000" stroke-width="1"/><line x1="833.5" y1="600" x2="833.5" y2="845" stroke="#545000" stroke-width="1"/><line x1="839.5" y1="600" x2="839.5" y2="845" stroke="#545000" stroke-width="1"/><line x1="844.5" y1="600" x2="844.5" y2="845" stroke="#545000" stroke-width="1"/><line x1="849.5" y1="600" x2="849.5" y2="845" stroke="#545000" stroke-width="1"/><line x1="854.5" y1="600" x2="854.5" y2="845" stroke="#545000" stroke-width="1"/><line x1="859.5" y1="600" x2="859.5" y2="845" stroke="#545000" stroke-width="1"/><line x1="865.5" y1="600" x2="865.5" y2="845" stroke="#545000" stroke-width="1"/><line x1="870.5" y1="600" x2="870.5" y2="845" stroke="#545000" stroke-width="1"/><line x1="880.5" y1="600" x2="880.5" y2="845" stroke="#545000" stroke-width="1"/><line x1="885.5" y1="600" x2="885.5" y2="845" stroke="#545000" stroke-width="1"/><line x1="890.5" y1="600" x2="890.5" y2="845" stroke="#545000" stroke-width="1"/><line x1="896.5" y1="600" x2="896.5" y2="845" stroke="#545000" stroke-width="1"/><line x1="901.5" y1="600" x2="901.5" y2="845" stroke="#545000" stroke-width="1"/><line x1="906.5" y1="600" x2="906.5" y2="845" stroke="#545000" stroke-width="1"/><line x1="911.5" y1="600" x2="911.5" y2="845" stroke="#545000" stroke-width="1"/><line x1="916.5" y1="600" x2="916.5" y2="845" stroke="#545000" stroke-width="1"/><line x1="736" y1="825.5" x2="922" y2="825.5" stroke="#999900" stroke-width="1"/><line x1="736" y1="806.5" x2="922" y2="806.5" stroke="#999900" stroke-width="1"/><line x1="736" y1="787.5" x2="922" y2="787.5" stroke="#999900" stroke-width="1"/><line x1="736" y1="769.5" x2="922" y2="769.5" stroke="#999900" stroke-width="1"/><line x1="736" y1="750.5" x2="922" y2="750.5" stroke="#999900" stroke-width="1"/><line x1="736" y1="731.5" x2="922" y2="731.5" stroke="#999900" stroke-width="1"/><line x1="736" y1="712.5" x2="922" y2="712.5" stroke="#999900" stroke-width="1"/><line x1="736" y1="693.5" x2="922" y2="693.5" stroke="#999900" stroke-width="1"/><line x1="736" y1="674.5" x2="922" y2="674.5" stroke="#999900" stroke-width="1"/><line x1="736" y1="656.5" x2="922" y2="656.5" stroke="#999900" stroke-width="1"/><line x1="736" y1="637.5" x2="922" y2="637.5" stroke="#999900" stroke-width="1"/><line x1="736" y1="618.5" x2="922" y2="618.5" stroke="#999900" stroke-width="1"/><line x1="828.5" y1="600" x2="828.5" y2="845" stroke="#999900" stroke-width="1"/><line x1="875.5" y1="600" x2="875.5" y2="845" stroke="#999900" stroke-width="1"/><g clip-path="url(#cp3)"><polygon points="782,739.1 784,741.8 786,728.4 788,716.7 790,716.6 792,719.4 794,720.1 796,717.0 798,716.8 800,720.3 802,719.6 804,715.7 806,716.4 808,717.0 810,717.5 812,718.3 814,719.7 816,720.4 818,717.3 820,717.7 822,720.5 824,719.8 826,714.0 828,713.8 830,716.9 832,714.9 834,718.4 836,715.1 838,720.4 840,715.8 842,715.5 844,716.7 846,717.7 848,714.4 850,714.0 852,716.5 854,719.4 856,715.5 858,714.1 860,719.8 862,719.0 864,717.8 866,715.7 868,715.9 870,719.3 872,719.9 874,721.0 876,719.7 878,720.0 880,716.5 882,720.1 884,713.9 886,715.5 888,714.5 890,715.9 892,718.1 894,717.4 896,719.6 898,717.7 900,716.5 902,716.8 904,713.9 906,720.5 908,718.2 910,713.9 912,717.5 914,717.4 916,717.4 918,720.0 920,715.5 922,715.8 922,816.1 920,816.4 918,814.8 916,817.3 914,813.5 912,818.4 910,815.7 908,815.5 906,817.9 904,815.6 902,816.0 900,818.5 898,818.4 896,813.5 894,816.8 892,816.8 890,815.9 888,813.7 886,816.5 884,815.4 882,814.2 880,817.3 878,816.0 876,817.5 874,814.4 872,815.3 870,818.6 868,816.9 866,813.5 864,815.9 862,818.3 860,816.8 858,816.3 856,816.8 854,817.4 852,816.3 850,817.0 848,817.1 846,815.0 844,815.2 842,817.3 840,818.7 838,817.5 836,818.7 834,816.2 832,817.1 830,814.6 828,818.6 826,816.7 824,817.1 822,816.2 820,815.6 818,817.1 816,817.4 814,814.6 812,817.7 810,813.8 808,814.7 806,816.3 804,815.9 802,818.5 800,815.8 798,815.2 796,815.8 794,816.7 792,815.9 790,818.8 788,818.7 786,813.4 784,813.9 782,814.0" fill="#ff0033" shape-rendering="auto" clip-path="url(#cp3)"/><circle cx="812.1" cy="710.2" r="3" fill="#ff0033"/><line x1="812.1" y1="710.2" x2="812.1" y2="718.2" stroke="#ff0033"/><circle cx="833.6" cy="713.0" r="3" fill="#ff0033"/><line x1="833.6" y1="713.0" x2="833.6" y2="718.2" stroke="#ff0033"/><circle cx="909.2" cy="712.3" r="3" fill="#ff0033"/><line x1="909.2" y1="712.3" x2="909.2" y2="718.2" stroke="#ff0033"/><circle cx="824.8" cy="713.5" r="3" fill="#ff0033"/><line x1="824.8" y1="713.5" x2="824.8" y2="718.2" stroke="#ff0033"/><circle cx="796.5" cy="711.4" r="3" fill="#ff0033"/><line x1="796.5" y1="711.4" x2="796.5" y2="718.2" stroke="#ff0033"/><circle cx="855.0" cy="710.7" r="3" fill="#ff0033"/><line x1="855.0" y1="710.7" x2="855.0" y2="718.2" stroke="#ff0033"/><circle cx="832.7" cy="717.8" r="3" fill="#ff0033"/><line x1="832.7" y1="717.8" x2="832.7" y2="718.2" stroke="#ff0033"/><circle cx="858.2" cy="714.9" r="3" fill="#ff0033"/><line x1="858.2" y1="714.9" x2="858.2" y2="718.2" stroke="#ff0033"/><circle cx="871.2" cy="713.8" r="3" fill="#ff0033"/><line x1="871.2" y1="713.8" x2="871.2" y2="718.2" stroke="#ff0033"/><circle cx="892.0" cy="712.3" r="3" fill="#ff0033"/><line x1="892.0" y1="712.3" x2="892.0" y2="718.2" stroke="#ff0033"/><circle cx="810.7" cy="717.6" r="3" fill="#ff0033"/><line x1="810.7" y1="717.6" x2="810.7" y2="718.2" stroke="#ff0033"/><circle cx="838.9" cy="711.8" r="3" fill="#ff0033"/><line x1="838.9" y1="711.8" x2="838.9" y2="718.2" stroke="#ff0033"/><circle cx="811.4" cy="715.0" r="3" fill="#ff0033"/><line x1="811.4" y1="715.0" x2="811.4" y2="718.2" stroke="#ff0033"/><circle cx="884.1" cy="709.9" r="3" fill="#ff0033"/><line x1="884.1" y1="709.9" x2="884.1" y2="718.2" stroke="#ff0033"/><circle cx="892.2" cy="715.2" r="3" fill="#ff0033"/><line x1="892.2" y1="715.2" x2="892.2" y2="718.2" stroke="#ff0033"/><circle cx="810.5" cy="713.8" r="3" fill="#ff0033"/><line x1="810.5" y1="713.8" x2="810.5" y2="718.2" stroke="#ff0033"/><circle cx="831.2" cy="711.7" r="3" fill="#ff0033"/><line x1="831.2" y1="711.7" x2="831.2" y2="718.2" stroke="#ff0033"/><circle cx="883.1" cy="716.5" r="3" fill="#ff0033"/><line x1="883.1" y1="716.5" x2="883.1" y2="718.2" stroke="#ff0033"/><circle cx="917.5" cy="719.3" r="3" fill="#ff0033"/><line x1="917.5" y1="719.3" x2="917.5" y2="718.2" stroke="#ff0033"/><circle cx="798.0" cy="715.2" r="3" fill="#ff0033"/><line x1="798.0" y1="715.2" x2="798.0" y2="718.2" stroke="#ff0033"/><circle cx="830.3" cy="715.1" r="3" fill="#ff0033"/><line x1="830.3" y1="715.1" x2="830.3" y2="718.2" stroke="#ff0033"/><circle cx="919.0" cy="713.8" r="3" fill="#ff0033"/><line x1="919.0" y1="713.8" x2="919.0" y2="718.2" stroke="#ff0033"/><circle cx="784.3" cy="710.7" r="3" fill="#ff0033"/><line x1="784.3" y1="710.7" x2="784.3" y2="718.2" stroke="#ff0033"/><circle cx="831.1" cy="713.4" r="3" fill="#ff0033"/><line x1="831.1" y1="713.4" x2="831.1" y2="718.2" stroke="#ff0033"/><circle cx="898.3" cy="718.9" r="3" fill="#ff0033"/><line x1="898.3" y1="718.9" x2="898.3" y2="718.2" stroke="#ff0033"/><circle cx="837.2" cy="712.7" r="3" fill="#ff0033"/><line x1="837.2" y1="712.7" x2="837.2" y2="718.2" stroke="#ff0033"/><circle cx="811.3" cy="710.9" r="3" fill="#ff0033"/><line x1="811.3" y1="710.9" x2="811.3" y2="718.2" stroke="#ff0033"/><circle cx="843.4" cy="713.5" r="3" fill="#ff0033"/><line x1="843.4" y1="713.5" x2="843.4" y2="718.2" stroke="#ff0033"/><circle cx="795.9" cy="710.3" r="3" fill="#ff0033"/><line x1="795.9" y1="710.3" x2="795.9" y2="718.2" stroke="#ff0033"/><circle cx="882.9" cy="715.3" r="3" fill="#ff0033"/><line x1="882.9" y1="715.3" x2="882.9" y2="718.2" stroke="#ff0033"/><circle cx="885.8" cy="719.2" r="3" fill="#ff0033"/><line x1="885.8" y1="719.2" x2="885.8" y2="718.2" stroke="#ff0033"/><circle cx="805.8" cy="709.8" r="3" fill="#ff0033"/><line x1="805.8" y1="709.8" x2="805.8" y2="718.2" stroke="#ff0033"/><circle cx="787.8" cy="714.0" r="3" fill="#ff0033"/><line x1="787.8" y1="714.0" x2="787.8" y2="718.2" stroke="#ff0033"/><circle cx="847.8" cy="713.3" r="3" fill="#ff0033"/><line x1="847.8" y1="713.3" x2="847.8" y2="718.2" stroke="#ff0033"/><circle cx="867.8" cy="713.9" r="3" fill="#ff0033"/><line x1="867.8" y1="713.9" x2="867.8" y2="718.2" stroke="#ff0033"/><circle cx="849.0" cy="710.4" r="3" fill="#ff0033"/><line x1="849.0" y1="710.4" x2="849.0" y2="718.2" stroke="#ff0033"/><circle cx="805.4" cy="714.4" r="3" fill="#ff0033"/><line x1="805.4" y1="714.4" x2="805.4" y2="718.2" stroke="#ff0033"/><circle cx="786.9" cy="711.8" r="3" fill="#ff0033"/><line x1="786.9" y1="711.8" x2="786.9" y2="718.2" stroke="#ff0033"/><circle cx="883.5" cy="719.1" r="3" fill="#ff0033"/><line x1="883.5" y1="719.1" x2="883.5" y2="718.2" stroke="#ff0033"/><circle cx="886.7" cy="718.7" r="3" fill="#ff0033"/><line x1="886.7" y1="718.7" x2="886.7" y2="718.2" stroke="#ff0033"/><circle cx="919.2" cy="718.1" r="3" fill="#ff0033"/><line x1="919.2" y1="718.1" x2="919.2" y2="718.2" stroke="#ff0033"/><circle cx="903.7" cy="719.8" r="3" fill="#ff0033"/><line x1="903.7" y1="719.8" x2="903.7" y2="718.2" stroke="#ff0033"/><circle cx="813.2" cy="714.9" r="3" fill="#ff0033"/><line x1="813.2" y1="714.9" x2="813.2" y2="718.2" stroke="#ff0033"/><circle cx="888.6" cy="716.7" r="3" fill="#ff0033"/><line x1="888.6" y1="716.7" x2="888.6" y2="718.2" stroke="#ff0033"/><circle cx="858.6" cy="711.5" r="3" fill="#ff0033"/><line x1="858.6" y1="711.5" x2="858.6" y2="718.2" stroke="#ff0033"/><circle cx="792.3" cy="818.9" r="3" fill="#ff0033"/><line x1="792.3" y1="818.9" x2="792.3" y2="814.3" stroke="#ff0033"/><circle cx="907.0" cy="819.4" r="3" fill="#ff0033"/><line x1="907.0" y1="819.4" x2="907.0" y2="814.3" stroke="#ff0033"/><circle cx="895.7" cy="820.4" r="3" fill="#ff0033"/><line x1="895.7" y1="820.4" x2="895.7" y2="814.3" stroke="#ff0033"/><circle cx="897.3" cy="818.0" r="3" fill="#ff0033"/><line x1="897.3" y1="818.0" x2="897.3" y2="814.3" stroke="#ff0033"/><circle cx="801.9" cy="822.8" r="3" fill="#ff0033"/><line x1="801.9" y1="822.8" x2="801.9" y2="814.3" stroke="#ff0033"/><circle cx="853.9" cy="818.0" r="3" fill="#ff0033"/><line x1="853.9" y1="818.0" x2="853.9" y2="814.3" stroke="#ff0033"/><circle cx="890.4" cy="819.8" r="3" fill="#ff0033"/><line x1="890.4" y1="819.8" x2="890.4" y2="814.3" stroke="#ff0033"/><circle cx="890.3" cy="822.8" r="3" fill="#ff0033"/><line x1="890.3" y1="822.8" x2="890.3" y2="814.3" stroke="#ff0033"/><circle cx="803.4" cy="819.7" r="3" fill="#ff0033"/><line x1="803.4" y1="819.7" x2="803.4" y2="814.3" stroke="#ff0033"/><circle cx="800.5" cy="823.4" r="3" fill="#ff0033"/><line x1="800.5" y1="823.4" x2="800.5" y2="814.3" stroke="#ff0033"/><circle cx="877.5" cy="820.3" r="3" fill="#ff0033"/><line x1="877.5" y1="820.3" x2="877.5" y2="814.3" stroke="#ff0033"/><circle cx="850.1" cy="818.6" r="3" fill="#ff0033"/><line x1="850.1" y1="818.6" x2="850.1" y2="814.3" stroke="#ff0033"/><circle cx="905.0" cy="823.4" r="3" fill="#ff0033"/><line x1="905.0" y1="823.4" x2="905.0" y2="814.3" stroke="#ff0033"/><circle cx="810.2" cy="823.5" r="3" fill="#ff0033"/><line x1="810.2" y1="823.5" x2="810.2" y2="814.3" stroke="#ff0033"/><circle cx="797.4" cy="820.8" r="3" fill="#ff0033"/><line x1="797.4" y1="820.8" x2="797.4" y2="814.3" stroke="#ff0033"/><circle cx="787.8" cy="817.9" r="3" fill="#ff0033"/><line x1="787.8" y1="817.9" x2="787.8" y2="814.3" stroke="#ff0033"/><circle cx="792.7" cy="821.6" r="3" fill="#ff0033"/><line x1="792.7" y1="821.6" x2="792.7" y2="814.3" stroke="#ff0033"/><circle cx="917.4" cy="819.8" r="3" fill="#ff0033"/><line x1="917.4" y1="819.8" x2="917.4" y2="814.3" stroke="#ff0033"/><circle cx="811.3" cy="821.9" r="3" fill="#ff0033"/><line x1="811.3" y1="821.9" x2="811.3" y2="814.3" stroke="#ff0033"/><circle cx="853.6" cy="818.4" r="3" fill="#ff0033"/><line x1="853.6" y1="818.4" x2="853.6" y2="814.3" stroke="#ff0033"/><circle cx="853.6" cy="822.1" r="3" fill="#ff0033"/><line x1="853.6" y1="822.1" x2="853.6" y2="814.3" stroke="#ff0033"/><circle cx="855.7" cy="818.0" r="3" fill="#ff0033"/><line x1="855.7" y1="818.0" x2="855.7" y2="814.3" stroke="#ff0033"/><circle cx="911.1" cy="817.7" r="3" fill="#ff0033"/><line x1="911.1" y1="817.7" x2="911.1" y2="814.3" stroke="#ff0033"/><circle cx="906.3" cy="822.4" r="3" fill="#ff0033"/><line x1="906.3" y1="822.4" x2="906.3" y2="814.3" stroke="#ff0033"/><circle cx="845.3" cy="821.0" r="3" fill="#ff0033"/><line x1="845.3" y1="821.0" x2="845.3" y2="814.3" stroke="#ff0033"/><circle cx="837.8" cy="821.7" r="3" fill="#ff0033"/><line x1="837.8" y1="821.7" x2="837.8" y2="814.3" stroke="#ff0033"/><circle cx="875.9" cy="820.9" r="3" fill="#ff0033"/><line x1="875.9" y1="820.9" x2="875.9" y2="814.3" stroke="#ff0033"/><circle cx="813.1" cy="821.8" r="3" fill="#ff0033"/><line x1="813.1" y1="821.8" x2="813.1" y2="814.3" stroke="#ff0033"/><circle cx="822" cy="688.1" r="3" fill="#ff0033"/><line x1="822" y1="688.1" x2="822" y2="718.2" stroke="#ff0033"/><circle cx="844" cy="693.7" r="3" fill="#ff0033"/><line x1="844" y1="693.7" x2="844" y2="718.2" stroke="#ff0033"/><circle cx="875" cy="697.5" r="3" fill="#ff0033"/><line x1="875" y1="697.5" x2="875" y2="718.2" stroke="#ff0033"/><circle cx="816" cy="701.3" r="3" fill="#ff0033"/><line x1="816" y1="701.3" x2="816" y2="718.2" stroke="#ff0033"/><circle cx="884" cy="703.2" r="3" fill="#ff0033"/><line x1="884" y1="703.2" x2="884" y2="718.2" stroke="#ff0033"/><circle cx="876" cy="705.0" r="3" fill="#ff0033"/><line x1="876" y1="705.0" x2="876" y2="718.2" stroke="#ff0033"/><circle cx="803" cy="710.7" r="3" fill="#ff0033"/><line x1="803" y1="710.7" x2="803" y2="718.2" stroke="#ff0033"/><circle cx="850" cy="701.3" r="3" fill="#ff0033"/><line x1="850" y1="701.3" x2="850" y2="718.2" stroke="#ff0033"/><circle cx="906" cy="706.9" r="3" fill="#ff0033"/><line x1="906" y1="706.9" x2="906" y2="718.2" stroke="#ff0033"/><circle cx="921" cy="710.7" r="3" fill="#ff0033"/><line x1="921" y1="710.7" x2="921" y2="718.2" stroke="#ff0033"/><circle cx="879" cy="837.0" r="3" fill="#ff0033"/><line x1="879" y1="837.0" x2="879" y2="814.3" stroke="#ff0033"/><circle cx="815" cy="831.3" r="3" fill="#ff0033"/><line x1="815" y1="831.3" x2="815" y2="814.3" stroke="#ff0033"/><circle cx="858" cy="829.4" r="3" fill="#ff0033"/><line x1="858" y1="829.4" x2="858" y2="814.3" stroke="#ff0033"/><circle cx="913" cy="825.7" r="3" fill="#ff0033"/><line x1="913" y1="825.7" x2="913" y2="814.3" stroke="#ff0033"/><circle cx="808" cy="823.8" r="3" fill="#ff0033"/><line x1="808" y1="823.8" x2="808" y2="814.3" stroke="#ff0033"/><line x1="781.5" y1="742.7" x2="781.5" y2="818.1" stroke="#ff0033" stroke-width="3"/></g><line x1="782.5" y1="600" x2="782.5" y2="845" stroke="#ffff00" stroke-width="1"/><line x1="736" y1="618.5" x2="922" y2="618.5" stroke="#ffff00" stroke-width="1"/><rect x="779" y="615.5" width="7" height="7" fill="#ff2020" opacity="0.85"/><path d="M779 615.5l7 7M786 615.5l-7 7" stroke="#ffd000" stroke-width="1.2"/><line x1="735.5" y1="599" x2="735.5" y2="845" stroke="#5a6070" stroke-width="1"/><line x1="735" y1="599.5" x2="922" y2="599.5" stroke="#5a6070" stroke-width="1"/><line x1="735" y1="845.5" x2="923" y2="845.5" stroke="#ececec" stroke-width="1"/><line x1="922.5" y1="599" x2="922.5" y2="846" stroke="#ececec" stroke-width="1"/><line x1="729" y1="844.5" x2="735" y2="844.5" stroke="#000" stroke-width="1"/><line x1="729" y1="825.5" x2="735" y2="825.5" stroke="#000" stroke-width="1"/><line x1="729" y1="806.5" x2="735" y2="806.5" stroke="#000" stroke-width="1"/><line x1="729" y1="787.5" x2="735" y2="787.5" stroke="#000" stroke-width="1"/><line x1="729" y1="769.5" x2="735" y2="769.5" stroke="#000" stroke-width="1"/><line x1="729" y1="750.5" x2="735" y2="750.5" stroke="#000" stroke-width="1"/><line x1="729" y1="731.5" x2="735" y2="731.5" stroke="#000" stroke-width="1"/><line x1="729" y1="712.5" x2="735" y2="712.5" stroke="#000" stroke-width="1"/><line x1="729" y1="693.5" x2="735" y2="693.5" stroke="#000" stroke-width="1"/><line x1="729" y1="674.5" x2="735" y2="674.5" stroke="#000" stroke-width="1"/><line x1="729" y1="656.5" x2="735" y2="656.5" stroke="#000" stroke-width="1"/><line x1="729" y1="637.5" x2="735" y2="637.5" stroke="#000" stroke-width="1"/><line x1="729" y1="618.5" x2="735" y2="618.5" stroke="#000" stroke-width="1"/><line x1="729" y1="599.5" x2="735" y2="599.5" stroke="#000" stroke-width="1"/><line x1="735.5" y1="847" x2="735.5" y2="852" stroke="#000" stroke-width="1"/><line x1="782.5" y1="847" x2="782.5" y2="852" stroke="#000" stroke-width="1"/><line x1="828.5" y1="847" x2="828.5" y2="852" stroke="#000" stroke-width="1"/><line x1="875.5" y1="847" x2="875.5" y2="852" stroke="#000" stroke-width="1"/><line x1="921.5" y1="847" x2="921.5" y2="852" stroke="#000" stroke-width="1"/><text transform="translate(702.5,723) rotate(-90)" text-anchor="middle" font-size="12" font-family="Liberation Sans">Counts/sec</text></svg>
<div class="t" style="left:100px;top:76.44px;font-size:12px;line-height:14px;">Cold head Temp [K]</div>
<div class="t" style="left:205px;top:76.44px;font-size:12px;line-height:14px;">Moderator Temp [K]</div>
<div style="left:98px;top:92px;width:15px;height:15px;background:linear-gradient(135deg,#8a8a8a 0%,#9a9a9a 50%,#cacaca 50%,#c4c4c4 100%)"><i style="position:absolute;left:4px;top:4px;width:8px;height:8px;background:#ff0000"></i></div>
<div style="left:116px;top:90px;width:50px;height:21px;background:#d4d4d4;border:1px solid #e6e6e6;border-right-color:#6a6a6a;border-bottom-color:#6a6a6a;box-shadow:inset 1px 1px 0 #6f6f6f, inset 2px 2px 0 #8a8a8a, inset -1px -1px 0 #fafafa, inset -2px -2px 0 #eeeeee"></div>
<div class="t" style="left:119px;top:94.04px;font-size:12px;line-height:14px;">6.22</div>
<div style="left:203px;top:92px;width:15px;height:15px;background:linear-gradient(135deg,#8a8a8a 0%,#9a9a9a 50%,#cacaca 50%,#c4c4c4 100%)"><i style="position:absolute;left:4px;top:4px;width:8px;height:8px;background:#33ffff"></i></div>
<div style="left:220px;top:90px;width:50px;height:21px;background:#d4d4d4;border:1px solid #e6e6e6;border-right-color:#6a6a6a;border-bottom-color:#6a6a6a;box-shadow:inset 1px 1px 0 #6f6f6f, inset 2px 2px 0 #8a8a8a, inset -1px -1px 0 #fafafa, inset -2px -2px 0 #eeeeee"></div>
<div class="t" style="left:223px;top:94.04px;font-size:12px;line-height:14px;">6.56</div>
<div class="t" style="left:168px;top:127.44px;font-size:12px;line-height:14px;">Coldhead</div>
<div class="t" style="left:-58.5px;width:600px;text-align:center;top:126.10px;font-size:13px;line-height:16px;-webkit-text-stroke:0">ON</div>
<div class="t" style="left:328px;top:112.44px;font-size:12px;line-height:14px;">Source Pressure [mbar]</div>
<div style="left:336px;top:137px;width:15px;height:15px;background:linear-gradient(135deg,#8a8a8a 0%,#9a9a9a 50%,#cacaca 50%,#c4c4c4 100%)"><i style="position:absolute;left:4px;top:4px;width:8px;height:8px;background:#ff0000"></i></div>
<div style="left:353px;top:135px;width:54px;height:21px;background:#d4d4d4;border:1px solid #e6e6e6;border-right-color:#6a6a6a;border-bottom-color:#6a6a6a;box-shadow:inset 1px 1px 0 #6f6f6f, inset 2px 2px 0 #8a8a8a, inset -1px -1px 0 #fafafa, inset -2px -2px 0 #eeeeee"></div>
<div class="t" style="left:356px;top:139.04px;font-size:12px;line-height:14px;">3.00E-9</div>
<div style="left:412.8px;top:133.5px;width:19px;height:19px;border-radius:50%;background:linear-gradient(135deg,#8a8a8a 0%,#a8a8a8 40%,#f4f4f4 85%)"><i style="position:absolute;left:2px;top:2px;width:15px;height:15px;border-radius:50%;background:radial-gradient(circle at 35% 28%,#90b080 0%,#3a6228 16%,#2a501a 45%,#142e08 100%)"></i></div>
<div style="left:413.7px;top:157.6px;width:19px;height:19px;border-radius:50%;background:linear-gradient(135deg,#8a8a8a 0%,#a8a8a8 40%,#f4f4f4 85%)"><i style="position:absolute;left:2px;top:2px;width:15px;height:15px;border-radius:50%;background:radial-gradient(circle at 35% 28%,#90b080 0%,#3a6228 16%,#2a501a 45%,#142e08 100%)"></i></div>
<div class="t" style="left:435px;top:138.94px;font-size:12px;line-height:14px;">Degas Source</div>
<div class="t" style="left:435px;top:159.44px;font-size:12px;line-height:14px;">Degas Trap</div>
<div class="t" style="left:536px;top:83.62px;font-size:11.5px;line-height:14px;">Stacker Pressure (mbar)</div>
<div style="left:557px;top:100px;width:13px;height:13px;background:linear-gradient(135deg,#8a8a8a 0%,#9a9a9a 50%,#cacaca 50%,#c4c4c4 100%)"><i style="position:absolute;left:4px;top:4px;width:6px;height:6px;background:#c8a0c8"></i></div>
<div style="left:571px;top:100px;width:54px;height:20px;background:#d4d4d4;border:1px solid #e6e6e6;border-right-color:#6a6a6a;border-bottom-color:#6a6a6a;box-shadow:inset 1px 1px 0 #6f6f6f, inset 2px 2px 0 #8a8a8a, inset -1px -1px 0 #fafafa, inset -2px -2px 0 #eeeeee"></div>
<div class="t" style="left:574px;top:104.22px;font-size:11.5px;line-height:14px;">3.00E-10</div>
<div class="t" style="left:552px;top:127.62px;font-size:11.5px;line-height:14px;">Trap Pressure [mbar]</div>
<div style="left:565px;top:145px;width:15px;height:15px;background:linear-gradient(135deg,#8a8a8a 0%,#9a9a9a 50%,#cacaca 50%,#c4c4c4 100%)"><i style="position:absolute;left:4px;top:4px;width:8px;height:8px;background:#3c96ff"></i></div>
<div style="left:582px;top:144px;width:50px;height:20px;background:#d4d4d4;border:1px solid #e6e6e6;border-right-color:#6a6a6a;border-bottom-color:#6a6a6a;box-shadow:inset 1px 1px 0 #6f6f6f, inset 2px 2px 0 #8a8a8a, inset -1px -1px 0 #fafafa, inset -2px -2px 0 #eeeeee"></div>
<div class="t" style="left:585px;top:148.04px;font-size:12px;line-height:14px;">1.20E-9</div>
<div class="t" style="left:24px;top:186.68px;font-size:11.3px;line-height:14px;">Neon Gas Feed [SCCM]</div>
<div style="left:37px;top:204.0px;width:7px;height:10.5px;background:#c9c9c9;box-shadow:inset 1px 1px 0 #efefef,inset -1px -1px 0 #7c7c7c"><svg width="7" height="10.5" style="position:absolute;left:0;top:0"><path d="M1.0 6.25L3.5 3.25L6.0 6.25Z M1.0 7.75H6.0" fill="#000" stroke="#000" stroke-width="0.5"/></svg></div>
<div style="left:37px;top:214.5px;width:7px;height:10.5px;background:#c9c9c9;box-shadow:inset 1px 1px 0 #efefef,inset -1px -1px 0 #7c7c7c"><svg width="7" height="10.5" style="position:absolute;left:0;top:0"><path d="M1.0 4.25L3.5 7.25L6.0 4.25Z M1.0 2.75H6.0" fill="#000" stroke="#000" stroke-width="0.5"/></svg></div>
<div style="left:45px;top:204px;width:49px;height:21px;background:#d4d4d4;border:1px solid #e6e6e6;border-right-color:#6a6a6a;border-bottom-color:#6a6a6a;box-shadow:inset 1px 1px 0 #6f6f6f, inset 2px 2px 0 #8a8a8a, inset -1px -1px 0 #fafafa, inset -2px -2px 0 #eeeeee"></div>
<div class="t" style="left:48px;top:208.04px;font-size:12px;line-height:14px;">0.00</div>
<div class="t" style="left:-18px;width:600px;text-align:center;top:215.44px;font-size:12px;line-height:14px;-webkit-text-stroke:0">RGM-1</div>
<div class="t" style="left:492px;top:215.44px;font-size:12px;line-height:14px;-webkit-text-stroke:0">Trap</div>
<div style="left:399px;top:229px;width:41px;height:25px;background:#d6d6d6;border-style:solid;border-width:4px 4px 4px 4px;border-color:#979797 #bdbdbd #c4c4c4 #a3a3a3"></div>
<div class="t" style="left:404px;top:235.44px;font-size:12px;line-height:14px;">27.4</div>
<div class="t" style="left:-204px;width:600px;text-align:right;top:232.83px;font-size:8px;line-height:10px;color:#303040;">Beam</div>
<div class="t" style="left:-204px;width:600px;text-align:right;top:243.83px;font-size:8px;line-height:10px;color:#303040;">Tube [C]</div>
<div style="left:399px;top:256px;width:41px;height:25px;background:#d6d6d6;border-style:solid;border-width:4px 4px 4px 4px;border-color:#979797 #bdbdbd #c4c4c4 #a3a3a3"></div>
<div class="t" style="left:404px;top:262.44px;font-size:12px;line-height:14px;">-10.0</div>
<div class="t" style="left:-204px;width:600px;text-align:right;top:259.83px;font-size:8px;line-height:10px;color:#303040;">Trap</div>
<div class="t" style="left:-204px;width:600px;text-align:right;top:270.83px;font-size:8px;line-height:10px;color:#303040;">Magnet [C]</div>
<div style="left:399px;top:283px;width:41px;height:25px;background:#d6d6d6;border-style:solid;border-width:4px 4px 4px 4px;border-color:#979797 #bdbdbd #c4c4c4 #a3a3a3"></div>
<div class="t" style="left:404px;top:289.44px;font-size:12px;line-height:14px;">25.4</div>
<div class="t" style="left:-204px;width:600px;text-align:right;top:286.83px;font-size:8px;line-height:10px;color:#303040;">Helmholtz</div>
<div class="t" style="left:-204px;width:600px;text-align:right;top:297.83px;font-size:8px;line-height:10px;color:#303040;">coils [C]</div>
<div style="left:399px;top:310px;width:41px;height:25px;background:#d6d6d6;border-style:solid;border-width:4px 4px 4px 4px;border-color:#979797 #bdbdbd #c4c4c4 #a3a3a3"></div>
<div class="t" style="left:404px;top:316.44px;font-size:12px;line-height:14px;">0.00</div>
<div class="t" style="left:-204px;width:600px;text-align:right;top:313.83px;font-size:8px;line-height:10px;color:#303040;">Saddle</div>
<div class="t" style="left:-204px;width:600px;text-align:right;top:324.83px;font-size:8px;line-height:10px;color:#303040;">Coils [C]</div>
<div style="left:399px;top:337px;width:41px;height:25px;background:#d6d6d6;border-style:solid;border-width:4px 4px 4px 4px;border-color:#979797 #bdbdbd #c4c4c4 #a3a3a3"></div>
<div class="t" style="left:404px;top:343.44px;font-size:12px;line-height:14px;">-10.0</div>
<div class="t" style="left:-204px;width:600px;text-align:right;top:340.83px;font-size:8px;line-height:10px;color:#303040;">Matching</div>
<div class="t" style="left:-204px;width:600px;text-align:right;top:351.83px;font-size:8px;line-height:10px;color:#303040;">coil [C]</div>
<div style="left:537px;top:267px;width:58px;height:17px;background:#d3d3d3;border:1px solid;border-color:#f0f0f0 #7a7a7a #7a7a7a #f0f0f0"></div>
<div class="t" style="left:266px;width:600px;text-align:center;top:269.44px;font-size:12px;line-height:14px;">Nitrogen</div>
<div style="left:634px;top:267px;width:23px;height:17px;background:#d3d3d3;border:1px solid;border-color:#f0f0f0 #7a7a7a #7a7a7a #f0f0f0"></div>
<div class="t" style="left:345.5px;width:600px;text-align:center;top:269.68px;font-size:11.3px;line-height:14px;">SF6</div>
<div style="left:518px;top:334.0px;width:8px;height:9.0px;background:#c9c9c9;box-shadow:inset 1px 1px 0 #efefef,inset -1px -1px 0 #7c7c7c"><svg width="8" height="9.0" style="position:absolute;left:0;top:0"><path d="M1.5 5.5L4.0 2.5L6.5 5.5Z M1.5 7.0H6.5" fill="#000" stroke="#000" stroke-width="0.5"/></svg></div>
<div style="left:518px;top:343.0px;width:8px;height:9.0px;background:#c9c9c9;box-shadow:inset 1px 1px 0 #efefef,inset -1px -1px 0 #7c7c7c"><svg width="8" height="9.0" style="position:absolute;left:0;top:0"><path d="M1.5 3.5L4.0 6.5L6.5 3.5Z M1.5 2.0H6.5" fill="#000" stroke="#000" stroke-width="0.5"/></svg></div>
<div style="left:526px;top:333px;width:48px;height:20px;background:#d4d4d4;border:1px solid #e6e6e6;border-right-color:#6a6a6a;border-bottom-color:#6a6a6a;box-shadow:inset 1px 1px 0 #6f6f6f, inset 2px 2px 0 #8a8a8a, inset -1px -1px 0 #fafafa, inset -2px -2px 0 #eeeeee"></div>
<div class="t" style="left:529px;top:337.04px;font-size:12px;line-height:14px;">0.00</div>
<div class="t" style="left:578px;top:340.33px;font-size:8px;line-height:10px;color:#303040;">SCCM</div>
<div style="left:518px;top:370.0px;width:8px;height:9.0px;background:#c9c9c9;box-shadow:inset 1px 1px 0 #efefef,inset -1px -1px 0 #7c7c7c"><svg width="8" height="9.0" style="position:absolute;left:0;top:0"><path d="M1.5 5.5L4.0 2.5L6.5 5.5Z M1.5 7.0H6.5" fill="#000" stroke="#000" stroke-width="0.5"/></svg></div>
<div style="left:518px;top:379.0px;width:8px;height:9.0px;background:#c9c9c9;box-shadow:inset 1px 1px 0 #efefef,inset -1px -1px 0 #7c7c7c"><svg width="8" height="9.0" style="position:absolute;left:0;top:0"><path d="M1.5 3.5L4.0 6.5L6.5 3.5Z M1.5 2.0H6.5" fill="#000" stroke="#000" stroke-width="0.5"/></svg></div>
<div style="left:525px;top:369px;width:48px;height:20px;background:#ffff99;border:1px solid #e6e6e6;border-right-color:#6a6a6a;border-bottom-color:#6a6a6a;box-shadow:inset 1px 1px 0 #6f6f6f, inset 2px 2px 0 #8a8a8a, inset -1px -1px 0 #fafafa, inset -2px -2px 0 #eeeeee"></div>
<div class="t" style="left:528px;top:373.04px;font-size:12px;line-height:14px;">0.10</div>
<div class="t" style="left:576px;top:375.83px;font-size:8px;line-height:10px;color:#303040;">SCCM</div>
<div style="left:612px;top:334.0px;width:8px;height:9.0px;background:#c9c9c9;box-shadow:inset 1px 1px 0 #efefef,inset -1px -1px 0 #7c7c7c"><svg width="8" height="9.0" style="position:absolute;left:0;top:0"><path d="M1.5 5.5L4.0 2.5L6.5 5.5Z M1.5 7.0H6.5" fill="#000" stroke="#000" stroke-width="0.5"/></svg></div>
<div style="left:612px;top:343.0px;width:8px;height:9.0px;background:#c9c9c9;box-shadow:inset 1px 1px 0 #efefef,inset -1px -1px 0 #7c7c7c"><svg width="8" height="9.0" style="position:absolute;left:0;top:0"><path d="M1.5 3.5L4.0 6.5L6.5 3.5Z M1.5 2.0H6.5" fill="#000" stroke="#000" stroke-width="0.5"/></svg></div>
<div style="left:620px;top:333px;width:48px;height:20px;background:#d4d4d4;border:1px solid #e6e6e6;border-right-color:#6a6a6a;border-bottom-color:#6a6a6a;box-shadow:inset 1px 1px 0 #6f6f6f, inset 2px 2px 0 #8a8a8a, inset -1px -1px 0 #fafafa, inset -2px -2px 0 #eeeeee"></div>
<div class="t" style="left:623px;top:337.04px;font-size:12px;line-height:14px;">0.00</div>
<div class="t" style="left:672px;top:340.33px;font-size:8px;line-height:10px;color:#303040;">SCCM</div>
<div style="left:612px;top:370.0px;width:8px;height:9.0px;background:#c9c9c9;box-shadow:inset 1px 1px 0 #efefef,inset -1px -1px 0 #7c7c7c"><svg width="8" height="9.0" style="position:absolute;left:0;top:0"><path d="M1.5 5.5L4.0 2.5L6.5 5.5Z M1.5 7.0H6.5" fill="#000" stroke="#000" stroke-width="0.5"/></svg></div>
<div style="left:612px;top:379.0px;width:8px;height:9.0px;background:#c9c9c9;box-shadow:inset 1px 1px 0 #efefef,inset -1px -1px 0 #7c7c7c"><svg width="8" height="9.0" style="position:absolute;left:0;top:0"><path d="M1.5 3.5L4.0 6.5L6.5 3.5Z M1.5 2.0H6.5" fill="#000" stroke="#000" stroke-width="0.5"/></svg></div>
<div style="left:619px;top:369px;width:48px;height:20px;background:#ffff99;border:1px solid #e6e6e6;border-right-color:#6a6a6a;border-bottom-color:#6a6a6a;box-shadow:inset 1px 1px 0 #6f6f6f, inset 2px 2px 0 #8a8a8a, inset -1px -1px 0 #fafafa, inset -2px -2px 0 #eeeeee"></div>
<div class="t" style="left:622px;top:373.04px;font-size:12px;line-height:14px;">0.04</div>
<div class="t" style="left:670px;top:375.83px;font-size:8px;line-height:10px;color:#303040;">SCCM</div>
<div class="t" style="left:92px;top:315.44px;font-size:12px;line-height:14px;">Roughing</div>
<div class="t" style="left:92px;top:330.44px;font-size:12px;line-height:14px;">Pressure [mbar]</div>
<div style="left:91px;top:348px;width:15px;height:15px;background:linear-gradient(135deg,#8a8a8a 0%,#9a9a9a 50%,#cacaca 50%,#c4c4c4 100%)"><i style="position:absolute;left:4px;top:4px;width:8px;height:8px;background:#55ee00"></i></div>
<div style="left:110px;top:348px;width:49px;height:21px;background:#d4d4d4;border:1px solid #e6e6e6;border-right-color:#6a6a6a;border-bottom-color:#6a6a6a;box-shadow:inset 1px 1px 0 #6f6f6f, inset 2px 2px 0 #8a8a8a, inset -1px -1px 0 #fafafa, inset -2px -2px 0 #eeeeee"></div>
<div class="t" style="left:113px;top:352.04px;font-size:12px;line-height:14px;">0.0002</div>
<div class="t" style="left:-115px;width:600px;text-align:center;top:352.44px;font-size:12px;line-height:14px;-webkit-text-stroke:0">T/C</div>
<div class="t" style="left:214px;width:600px;text-align:center;top:460.94px;font-size:12px;line-height:14px;-webkit-text-stroke:0">T/C</div>
<div class="t" style="left:55px;top:400.44px;font-size:12px;line-height:14px;">Safemode</div>
<div style="left:54px;top:417px;width:12px;height:22px;border-radius:50%;background:linear-gradient(90deg,#9c9c9c 0%,#e4e4e4 45%,#c8c8c8 70%,#8a8a8a 100%);box-shadow:0 0 0 0.5px #8a8a8a"><svg width="12" height="22" style="position:absolute;left:0;top:0"><path d="M4.5 9L6 4.5L7.5 9M4.5 13L6 17.5L7.5 13" fill="none" stroke="#666" stroke-width="0.8"/><line x1="1" y1="11" x2="11" y2="11" stroke="#9a9a9a"/></svg></div>
<div style="left:65px;top:418px;width:101px;height:26px;background:#80f870;border-style:solid;border-width:3px 4px 3px 4px;border-color:#959595 #c4c4c4 #c8c8c8 #a0a0a0"></div>
<div class="t" style="left:70px;top:423.60px;font-size:13px;line-height:16px;font-weight:bold;transform:scaleX(0.9);transform-origin:0 0">PROTECTED</div>
<div class="t" style="left:-76px;width:600px;text-align:center;top:446.44px;font-size:12px;line-height:14px;">Source Roughing</div>
<div class="t" style="left:-76px;width:600px;text-align:center;top:461.44px;font-size:12px;line-height:14px;">Pump</div>
<div style="left:268px;top:365px;width:90px;height:137px;border:1px solid #e2e2e2"></div>
<div style="left:269px;top:366px;width:88px;height:135px;border:1px solid #6e6e6e;border-right-color:#6e6e6e"></div>
<div class="t" style="left:276px;top:370.44px;font-size:12px;line-height:14px;">Source ion pump</div>
<div class="t" style="left:276px;top:382.44px;font-size:12px;line-height:14px;">Voltage [V]</div>
<div style="left:274px;top:398px;width:64px;height:25px;background:#d6d6d6;border-style:solid;border-width:4px 4px 4px 4px;border-color:#979797 #bdbdbd #c4c4c4 #a3a3a3"></div>
<div class="t" style="left:278.5px;top:403.94px;font-size:12px;line-height:14px;">7000</div>
<div class="t" style="left:276px;top:420.44px;font-size:12px;line-height:14px;">Current [A]</div>
<div style="left:274px;top:436px;width:64px;height:25px;background:#d6d6d6;border-style:solid;border-width:4px 4px 4px 4px;border-color:#979797 #bdbdbd #c4c4c4 #a3a3a3"></div>
<div class="t" style="left:278.5px;top:441.94px;font-size:12px;line-height:14px;">0.00E+0</div>
<div class="t" style="left:276px;top:458.44px;font-size:12px;line-height:14px;">Pressure [mbar]</div>
<div style="left:274px;top:474px;width:64px;height:25px;background:#d6d6d6;border-style:solid;border-width:4px 4px 4px 4px;border-color:#979797 #bdbdbd #c4c4c4 #a3a3a3"></div>
<div class="t" style="left:278.5px;top:479.94px;font-size:12px;line-height:14px;">2.50E-9</div>
<div class="t" style="left:415px;top:383.44px;font-size:12px;line-height:14px;">Cryopump</div>
<div class="t" style="left:415px;top:398.44px;font-size:12px;line-height:14px;">Temp [K]</div>
<div style="left:396px;top:416px;width:15px;height:15px;background:linear-gradient(135deg,#8a8a8a 0%,#9a9a9a 50%,#cacaca 50%,#c4c4c4 100%)"><i style="position:absolute;left:4px;top:4px;width:8px;height:8px;background:#ffee00"></i></div>
<div style="left:413px;top:414px;width:54px;height:25px;background:#d6d6d6;border-style:solid;border-width:4px 4px 4px 4px;border-color:#979797 #bdbdbd #c4c4c4 #a3a3a3"></div>
<div class="t" style="left:418px;top:420.04px;font-size:12px;line-height:14px;">-1.00</div>
<div style="left:471px;top:490px;width:15px;height:15px;background:linear-gradient(135deg,#8a8a8a 0%,#9a9a9a 50%,#cacaca 50%,#c4c4c4 100%)"><i style="position:absolute;left:4px;top:4px;width:8px;height:8px;background:#ffee77"></i></div>
<div style="left:488px;top:488px;width:58px;height:21px;background:#d4d4d4;border:1px solid #e6e6e6;border-right-color:#6a6a6a;border-bottom-color:#6a6a6a;box-shadow:inset 1px 1px 0 #6f6f6f, inset 2px 2px 0 #8a8a8a, inset -1px -1px 0 #fafafa, inset -2px -2px 0 #eeeeee"></div>
<div class="t" style="left:491px;top:492.04px;font-size:12px;line-height:14px;">0.0008</div>
<div class="t" style="left:472px;top:510.44px;font-size:12px;line-height:14px;">Trap Roughing</div>
<div class="t" style="left:472px;top:524.94px;font-size:12px;line-height:14px;">Pressure [mbar]</div>
<div class="t" style="left:303px;width:600px;text-align:center;top:516.44px;font-size:12px;line-height:14px;">Trap Roughing</div>
<div class="t" style="left:303px;width:600px;text-align:center;top:531.44px;font-size:12px;line-height:14px;">Pump</div>
<div style="left:100px;top:500px;width:170px;height:66px;overflow:hidden"><div class="t" style="left:4.5px;top:9.44px;font-size:12px;line-height:14px;">opens the roughing line if ion</div><div class="t" style="left:4.5px;top:24.44px;font-size:12px;line-height:14px;">pump stops.</div><div class="t" style="left:4.5px;top:39.44px;font-size:12px;line-height:14px;">has to be turned on manually</div><div class="t" style="left:4.5px;top:53.94px;font-size:12px;line-height:14px;">after ion pump ramped up</div></div>
<div class="t" style="left:272.5px;top:507.44px;font-size:12px;line-height:14px;">Ion pump interlock</div>
<div style="left:271px;top:523px;width:49px;height:19px;border-radius:50%;background:radial-gradient(ellipse at 50% 40%,#c8c8c8 0%,#a0a0a0 60%,#6a6a6a 100%);border:1px solid #555"><svg width="49" height="19" style="position:absolute;left:-1px;top:-1px"><path d="M31 4.5L42 9.5L31 14.5Z" fill="#33ee11"/></svg></div>
<div class="t" style="left:25px;width:600px;text-align:center;top:324.10px;font-size:13px;line-height:16px;-webkit-text-stroke:0">ON</div>
<div class="t" style="left:176px;width:600px;text-align:center;top:347.77px;font-size:12.5px;line-height:15px;-webkit-text-stroke:0">Cryo</div>
<div class="t" style="left:744px;top:83.44px;font-size:12px;line-height:14px;">System Status</div>
<div style="left:744px;top:98px;width:203px;height:30px;background:#8a8a8a;border-top:2px solid #d2d2d2;border-left:1px solid #c8c8c8;border-bottom:2px solid #6e6e6e;border-right:1px solid #777"></div>
<div style="left:746px;top:100px;width:178px;height:26px;background:#fbfbfb"></div>
<div style="left:924px;top:100px;width:22px;height:26px;background:linear-gradient(90deg,#b9b9b9 0%,#c9c9c9 30%,#bdbdbd 70%,#7a7a7a 100%)"><svg width="23" height="30" style="position:absolute;left:0;top:0"><path d="M2.5 10.0H15.5L9 18.0Z" fill="none" stroke="#555" stroke-width="1"/></svg></div>
<div class="t" style="left:748px;top:104.06px;font-size:16px;line-height:19px;font-weight:bold;">SOURCE ONLY</div>
<div class="t" style="left:744px;top:142.44px;font-size:12px;line-height:14px;">Trap State</div>
<div style="left:744px;top:156px;width:200px;height:30px;background:#8a8a8a;border-top:2px solid #d2d2d2;border-left:1px solid #c8c8c8;border-bottom:2px solid #6e6e6e;border-right:1px solid #777"></div>
<div style="left:746px;top:158px;width:175px;height:26px;background:#f0f0f0"></div>
<div style="left:921px;top:158px;width:22px;height:26px;background:linear-gradient(90deg,#b9b9b9 0%,#c9c9c9 30%,#bdbdbd 70%,#7a7a7a 100%)"><svg width="23" height="30" style="position:absolute;left:0;top:0"><path d="M2.5 10.0H15.5L9 18.0Z" fill="none" stroke="#555" stroke-width="1"/></svg></div>
<div class="t" style="left:748px;top:162.06px;font-size:16px;line-height:19px;font-weight:bold;">OFF</div>
<div style="left:743px;top:195px;width:205px;height:108px;border:1px solid;border-color:#e8e8e8 #e8e8e8 #e8e8e8 #e8e8e8"></div>
<div style="left:744px;top:196px;width:203px;height:106px;border:1px solid #555"></div>
<div class="t" style="left:747.5px;top:199.73px;font-size:10.6px;line-height:13px;font-weight:bold;">Cycle Trap Times [s] &amp; Freq. [Hz]</div>
<div style="left:760px;top:215px;width:47px;height:16px;background:#c6beaf"></div>
<div class="t" style="left:761.5px;top:217.22px;font-size:11.5px;line-height:14px;color:#9b8b82;">Fill Time</div>
<div style="left:749px;top:231px;width:11px;height:26px;border-radius:6px/11px;background:linear-gradient(90deg,#b8b0a0,#e6dfd2 50%,#b8b0a0);border:1px solid #c9c1b2"><svg width="11" height="26" style="position:absolute;left:-1px;top:-1px"><path d="M4 10.0L5.5 5.0M7 10.0L5.5 5.0M4 16.0L5.5 21.0M7 16.0L5.5 21.0" stroke="#8a8275"/><line x1="1" y1="13.0" x2="10" y2="13.0" stroke="#a8a090"/></svg></div>
<div style="left:760px;top:231px;width:45px;height:26px;background:#e8e2d4;border-style:solid;border-width:4px 3px 3px 4px;border-color:#bcb4a4 #d4ccbc #d4ccbc #bcb4a4"></div>
<div class="t" style="left:766px;top:237.94px;font-size:12px;line-height:14px;color:#9b8b82;">0.100</div>
<div style="left:818px;top:215px;width:60px;height:16px;background:#c6beaf"></div>
<div class="t" style="left:819.5px;top:217.22px;font-size:11.5px;line-height:14px;color:#9b8b82;">Store Time</div>
<div style="left:808px;top:231px;width:11px;height:26px;border-radius:6px/11px;background:linear-gradient(90deg,#b8b0a0,#e6dfd2 50%,#b8b0a0);border:1px solid #c9c1b2"><svg width="11" height="26" style="position:absolute;left:-1px;top:-1px"><path d="M4 10.0L5.5 5.0M7 10.0L5.5 5.0M4 16.0L5.5 21.0M7 16.0L5.5 21.0" stroke="#8a8275"/><line x1="1" y1="13.0" x2="10" y2="13.0" stroke="#a8a090"/></svg></div>
<div style="left:819px;top:231px;width:45px;height:26px;background:#e8e2d4;border-style:solid;border-width:4px 3px 3px 4px;border-color:#bcb4a4 #d4ccbc #d4ccbc #bcb4a4"></div>
<div class="t" style="left:825px;top:237.94px;font-size:12px;line-height:14px;color:#9b8b82;">0.010</div>
<div style="left:889px;top:215px;width:63px;height:16px;background:#c6beaf"></div>
<div class="t" style="left:890.5px;top:217.22px;font-size:11.5px;line-height:14px;color:#9b8b82;">Dump Time</div>
<div style="left:878px;top:231px;width:11px;height:26px;border-radius:6px/11px;background:linear-gradient(90deg,#b8b0a0,#e6dfd2 50%,#b8b0a0);border:1px solid #c9c1b2"><svg width="11" height="26" style="position:absolute;left:-1px;top:-1px"><path d="M4 10.0L5.5 5.0M7 10.0L5.5 5.0M4 16.0L5.5 21.0M7 16.0L5.5 21.0" stroke="#8a8275"/><line x1="1" y1="13.0" x2="10" y2="13.0" stroke="#a8a090"/></svg></div>
<div style="left:889px;top:231px;width:45px;height:26px;background:#e8e2d4;border-style:solid;border-width:4px 3px 3px 4px;border-color:#bcb4a4 #d4ccbc #d4ccbc #bcb4a4"></div>
<div class="t" style="left:895px;top:237.94px;font-size:12px;line-height:14px;color:#9b8b82;">0.001</div>
<div style="left:788px;top:257px;width:47px;height:16px;background:#c6beaf"></div>
<div class="t" style="left:789.5px;top:259.02px;font-size:11.5px;line-height:14px;color:#9b8b82;">Fill Freq.</div>
<div style="left:777px;top:273px;width:11px;height:26px;border-radius:6px/11px;background:linear-gradient(90deg,#b8b0a0,#e6dfd2 50%,#b8b0a0);border:1px solid #c9c1b2"><svg width="11" height="26" style="position:absolute;left:-1px;top:-1px"><path d="M4 10.0L5.5 5.0M7 10.0L5.5 5.0M4 16.0L5.5 21.0M7 16.0L5.5 21.0" stroke="#8a8275"/><line x1="1" y1="13.0" x2="10" y2="13.0" stroke="#a8a090"/></svg></div>
<div style="left:788px;top:273px;width:65px;height:26px;background:#e8e2d4;border-style:solid;border-width:4px 3px 3px 4px;border-color:#bcb4a4 #d4ccbc #d4ccbc #bcb4a4"></div>
<div class="t" style="left:794px;top:279.64px;font-size:12px;line-height:14px;color:#9b8b82;">4.500E+6</div>
<div style="left:869px;top:257px;width:60px;height:16px;background:#c6beaf"></div>
<div class="t" style="left:870.5px;top:259.02px;font-size:11.5px;line-height:14px;color:#9b8b82;">Store Freq.</div>
<div style="left:858px;top:273px;width:11px;height:26px;border-radius:6px/11px;background:linear-gradient(90deg,#b8b0a0,#e6dfd2 50%,#b8b0a0);border:1px solid #c9c1b2"><svg width="11" height="26" style="position:absolute;left:-1px;top:-1px"><path d="M4 10.0L5.5 5.0M7 10.0L5.5 5.0M4 16.0L5.5 21.0M7 16.0L5.5 21.0" stroke="#8a8275"/><line x1="1" y1="13.0" x2="10" y2="13.0" stroke="#a8a090"/></svg></div>
<div style="left:869px;top:273px;width:65px;height:26px;background:#e8e2d4;border-style:solid;border-width:4px 3px 3px 4px;border-color:#bcb4a4 #d4ccbc #d4ccbc #bcb4a4"></div>
<div class="t" style="left:875px;top:279.64px;font-size:12px;line-height:14px;color:#9b8b82;">5.100E+6</div>
<div style="left:749px;top:276px;width:21px;height:21px;background:#c6beaf;border-radius:2px"><i style="position:absolute;left:3px;top:3px;width:15px;height:15px;border-radius:50%;background:radial-gradient(circle at 45% 35%,#b0f090 0%,#80e050 50%,#60b040 100%)"></i></div>
<div class="t" style="left:744.5px;top:304.44px;font-size:12px;line-height:14px;">Messages</div>
<div style="left:742px;top:321px;width:205px;height:200px;background:#fafafa;border-style:solid;border-width:4px 4px 3px 5px;border-color:#8f8f8f #c4c4c4 #c8c8c8 #9a9a9a"></div>
<div class="t" style="left:744.5px;top:523.44px;font-size:12px;line-height:14px;">Gamma Ray Count [1/s]</div>
<div style="left:742px;top:539px;width:205px;height:25px;background:#d4d4d4;border-style:solid;border-width:3px 3px 3px 4px;border-color:#8f8f8f #c4c4c4 #c8c8c8 #9a9a9a"></div>
<div class="t" style="left:748px;top:545.10px;font-size:13px;line-height:16px;font-weight:bold;">92.2255</div>
<div class="t" style="left:-519px;width:600px;text-align:right;top:865.43px;font-size:10.6px;line-height:13px;">1.0E-10</div>
<div class="t" style="left:-519px;width:600px;text-align:right;top:827.43px;font-size:10.6px;line-height:13px;">1.0E-9</div>
<div class="t" style="left:-519px;width:600px;text-align:right;top:788.43px;font-size:10.6px;line-height:13px;">1.0E-8</div>
<div class="t" style="left:-519px;width:600px;text-align:right;top:750.43px;font-size:10.6px;line-height:13px;">1.0E-7</div>
<div class="t" style="left:-519px;width:600px;text-align:right;top:711.43px;font-size:10.6px;line-height:13px;">1.0E-6</div>
<div class="t" style="left:-519px;width:600px;text-align:right;top:673.43px;font-size:10.6px;line-height:13px;">1.0E-5</div>
<div class="t" style="left:-519px;width:600px;text-align:right;top:634.43px;font-size:10.6px;line-height:13px;">1.0E-4</div>
<div class="t" style="left:-519px;width:600px;text-align:right;top:596.43px;font-size:10.6px;line-height:13px;">1.0E-3</div>
<div class="t" style="left:-209.5px;width:600px;text-align:center;top:880.43px;font-size:10.6px;line-height:13px;">00:00</div>
<div class="t" style="left:-162.5px;width:600px;text-align:center;top:880.43px;font-size:10.6px;line-height:13px;">02:00</div>
<div class="t" style="left:-116.5px;width:600px;text-align:center;top:880.43px;font-size:10.6px;line-height:13px;">04:00</div>
<div class="t" style="left:-69.5px;width:600px;text-align:center;top:880.43px;font-size:10.6px;line-height:13px;">06:00</div>
<div class="t" style="left:0.5px;width:600px;text-align:center;top:880.43px;font-size:10.6px;line-height:13px;">09:00</div>
<div class="t" style="left:-92.5px;width:600px;text-align:center;top:896.44px;font-size:12px;line-height:14px;">Time</div>
<div class="t" style="left:-200px;width:600px;text-align:right;top:851.43px;font-size:10.6px;line-height:13px;">-20.0</div>
<div class="t" style="left:-200px;width:600px;text-align:right;top:821.43px;font-size:10.6px;line-height:13px;">0.0</div>
<div class="t" style="left:-200px;width:600px;text-align:right;top:792.43px;font-size:10.6px;line-height:13px;">20.0</div>
<div class="t" style="left:-200px;width:600px;text-align:right;top:762.43px;font-size:10.6px;line-height:13px;">40.0</div>
<div class="t" style="left:-200px;width:600px;text-align:right;top:732.43px;font-size:10.6px;line-height:13px;">60.0</div>
<div class="t" style="left:-200px;width:600px;text-align:right;top:703.43px;font-size:10.6px;line-height:13px;">80.0</div>
<div class="t" style="left:-200px;width:600px;text-align:right;top:673.43px;font-size:10.6px;line-height:13px;">100.0</div>
<div class="t" style="left:-200px;width:600px;text-align:right;top:643.43px;font-size:10.6px;line-height:13px;">120.0</div>
<div class="t" style="left:-200px;width:600px;text-align:right;top:614.43px;font-size:10.6px;line-height:13px;">140.0</div>
<div class="t" style="left:-200px;width:600px;text-align:right;top:584.43px;font-size:10.6px;line-height:13px;">160.0</div>
<div class="t" style="left:109.5px;width:600px;text-align:center;top:866.43px;font-size:10.6px;line-height:13px;">21:00</div>
<div class="t" style="left:109.5px;width:600px;text-align:center;top:880.18px;font-size:11.3px;line-height:14px;">4/25/2023</div>
<div class="t" style="left:162.5px;width:600px;text-align:center;top:866.43px;font-size:10.6px;line-height:13px;">00:00</div>
<div class="t" style="left:162.5px;width:600px;text-align:center;top:880.18px;font-size:11.3px;line-height:14px;">4/26/2023</div>
<div class="t" style="left:268.5px;width:600px;text-align:center;top:866.43px;font-size:10.6px;line-height:13px;">06:00</div>
<div class="t" style="left:268.5px;width:600px;text-align:center;top:880.18px;font-size:11.3px;line-height:14px;">4/26/2023</div>
<div class="t" style="left:321.5px;width:600px;text-align:center;top:866.43px;font-size:10.6px;line-height:13px;">09:00</div>
<div class="t" style="left:321.5px;width:600px;text-align:center;top:880.18px;font-size:11.3px;line-height:14px;">4/26/2023</div>
<div class="t" style="left:198px;width:600px;text-align:center;top:897.44px;font-size:12px;line-height:14px;">Time</div>
<div class="t" style="left:127px;width:600px;text-align:right;top:839.22px;font-size:11.2px;line-height:13px;">50</div>
<div class="t" style="left:127px;width:600px;text-align:right;top:820.22px;font-size:11.2px;line-height:13px;">60</div>
<div class="t" style="left:127px;width:600px;text-align:right;top:801.22px;font-size:11.2px;line-height:13px;">70</div>
<div class="t" style="left:127px;width:600px;text-align:right;top:782.22px;font-size:11.2px;line-height:13px;">80</div>
<div class="t" style="left:127px;width:600px;text-align:right;top:764.22px;font-size:11.2px;line-height:13px;">90</div>
<div class="t" style="left:127px;width:600px;text-align:right;top:745.22px;font-size:11.2px;line-height:13px;">100</div>
<div class="t" style="left:127px;width:600px;text-align:right;top:726.22px;font-size:11.2px;line-height:13px;">110</div>
<div class="t" style="left:127px;width:600px;text-align:right;top:707.22px;font-size:11.2px;line-height:13px;">120</div>
<div class="t" style="left:127px;width:600px;text-align:right;top:688.22px;font-size:11.2px;line-height:13px;">130</div>
<div class="t" style="left:127px;width:600px;text-align:right;top:669.22px;font-size:11.2px;line-height:13px;">140</div>
<div class="t" style="left:127px;width:600px;text-align:right;top:651.22px;font-size:11.2px;line-height:13px;">150</div>
<div class="t" style="left:127px;width:600px;text-align:right;top:632.22px;font-size:11.2px;line-height:13px;">160</div>
<div class="t" style="left:127px;width:600px;text-align:right;top:613.22px;font-size:11.2px;line-height:13px;">170</div>
<div class="t" style="left:127px;width:600px;text-align:right;top:594.22px;font-size:11.2px;line-height:13px;">180</div>
<div class="t" style="left:435.5px;width:600px;text-align:center;top:853.68px;font-size:11.3px;line-height:14px;">21:00</div>
<div class="t" style="left:435.5px;width:600px;text-align:center;top:869.18px;font-size:11.3px;line-height:14px;">4/25/2023</div>
<div class="t" style="left:528.5px;width:600px;text-align:center;top:853.68px;font-size:11.3px;line-height:14px;">03:00</div>
<div class="t" style="left:528.5px;width:600px;text-align:center;top:869.18px;font-size:11.3px;line-height:14px;">4/26/2023</div>
<div class="t" style="left:622.5px;width:600px;text-align:center;top:853.68px;font-size:11.3px;line-height:14px;">09:00</div>
<div class="t" style="left:622.5px;width:600px;text-align:center;top:869.18px;font-size:11.3px;line-height:14px;">4/26/2023</div>
<div class="t" style="left:532px;width:600px;text-align:center;top:884.94px;font-size:12px;line-height:14px;">Time</div>
<div style="left:20px;top:921px;width:56px;height:25px;background:#d4d4d4;border-style:solid;border-width:3px;border-color:#c2b49a #efe3cc #efe3cc #c2b49a"></div>
<div class="t" style="left:25px;top:927.44px;font-size:12px;line-height:14px;">1765</div>
<div class="t" style="left:78.5px;top:922.94px;font-size:12px;line-height:14px;">Cycle time [ms]</div>
<div style="left:79px;top:937px;width:74px;height:11px;"><i style="position:absolute;left:1px;top:1px;width:72px;height:9px;background:linear-gradient(#0e2a08,#3b6a2a 40%,#1a3a10 70%,#0a2006)"></i></div>
<div style="left:192px;top:920px;width:205px;height:33px;background:linear-gradient(90deg,#8e8e8e 0%,#bdbdbd 4%,#c6c6c6 50%,#bdbdbd 95%,#6e6e6e 100%);border:1px solid #3c3c3c;border-radius:2px;box-shadow:inset 0 2px 0 #d8d8d8,inset 0 -2px 0 #8c8c8c"></div>
<div class="t" style="left:-7px;width:600px;text-align:center;top:928.56px;font-size:16px;line-height:19px;font-weight:bold;color:#ff0000;">STOP PROGRAM</div>
<div style="left:435px;top:915px;width:235px;height:37px;background:#80ff70;border-style:solid;border-width:4px;border-color:#c4b69c #efe4cf #efe4cf #c4b69c"></div>
<div class="t" style="left:252.5px;width:600px;text-align:center;top:925.16px;font-size:18.6px;line-height:22px;">System OK</div>
<div class="t" style="left:699.5px;top:929.94px;font-size:12px;line-height:14px;">Last moderator grown</div>
<div style="left:820px;top:924px;width:131px;height:24px;background:#d4d4d4;border-style:solid;border-width:3px;border-color:#c2b49a #efe3cc #efe3cc #c2b49a"></div>
<div class="t" style="left:825px;top:930.44px;font-size:12px;line-height:14px;">Mon 24 Apr 2023 10:</div></body></html>
